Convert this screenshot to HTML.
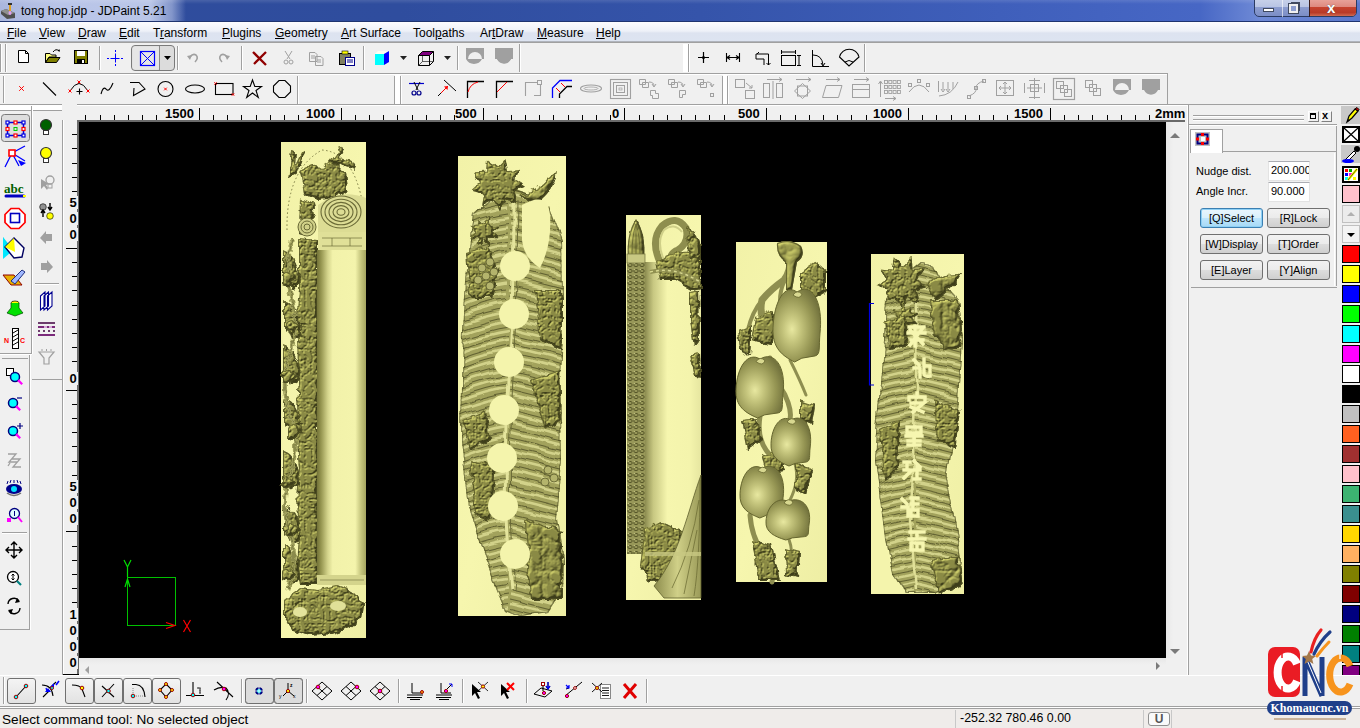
<!DOCTYPE html><html><head><meta charset="utf-8"><style>
*{margin:0;padding:0;box-sizing:border-box}
html,body{width:1360px;height:728px;overflow:hidden;background:#f0f0f0;font-family:"Liberation Sans",sans-serif;color:#000}
.a{position:absolute}
.hl{position:absolute;height:1px}
.vl{position:absolute;width:1px}
svg{position:absolute;overflow:visible}
.menu span{position:absolute;top:27px;font-size:12px;line-height:12px;white-space:nowrap}
.menu u{text-decoration:underline;text-underline-offset:1px;text-decoration-thickness:1px}
.rl{position:absolute;font-weight:bold;font-size:13px;line-height:13px;background:#f0f0f0}
.btn{position:absolute;border:1px solid #707070;border-radius:3px;background:linear-gradient(#f2f2f2,#ebebeb 50%,#dddddd 51%,#cfcfcf);font-size:11px;text-align:center;line-height:18px}
.pal{position:absolute;left:1342px;width:18px;height:18px;border:1px solid #000}
.tb{position:absolute;border:1px solid #707070;border-radius:3px;background:linear-gradient(#f2f2f2,#ebebeb 50%,#dddddd 51%,#cfcfcf)}
</style></head><body>
<div class="a" style="left:0;top:0;width:1360px;height:22px;background:linear-gradient(90deg,#2f4c9c 0px,#2f4d9e 400px,#3554aa 700px,#3f5fbb 1000px,#4767c5 1200px,#6f8ad6 1260px,#5a78cc 1360px)"></div>
<div class="a" style="left:0;top:0;width:190px;height:22px;background:linear-gradient(90deg,#aab6de 0px,#b9c5e8 60px,#bac6e8 150px,rgba(186,198,232,0.6) 172px,rgba(186,198,232,0) 186px)"></div>
<div class="a" style="left:0;top:0;width:1360px;height:4px;background:linear-gradient(rgba(255,255,255,0.12),rgba(255,255,255,0))"></div>
<div class="hl" style="left:0;top:21px;width:1360px;background:#1f3470"></div>
<div class="a" style="left:21px;top:4px;font-size:12px;line-height:14px;color:#000;white-space:nowrap">tong hop.jdp - JDPaint 5.21</div>
<div class="a" style="left:1254px;top:-2px;width:103px;height:19px;border:1px solid #2b3b63;border-radius:0 0 5px 5px;overflow:hidden;background:linear-gradient(#c8d2ea,#b9c5e4 45%,#8d9ed0 46%,#7c8ec6)"></div>
<div class="a" style="left:1309px;top:-1px;width:47px;height:17px;border-radius:0 0 4px 0;background:linear-gradient(#e9a59c,#de8a80 45%,#c8432f 46%,#b83a28 80%,#d06a50)"></div>
<div class="vl" style="left:1282px;top:0;height:17px;background:#fff;opacity:.6"></div>
<div class="vl" style="left:1309px;top:0;height:17px;background:#3b1d1a"></div>
<div class="a" style="left:1263px;top:8px;width:11px;height:4px;background:#fff;border:1px solid #404a60"></div>
<div class="a" style="left:1291px;top:2px;width:9px;height:9px;border:1px solid #404a60;background:#fff"></div>
<div class="a" style="left:1289px;top:4px;width:9px;height:9px;border:2px solid #f0f0f0;outline:1px solid #404a60;background:#8d9ed0"></div>
<div class="a" style="left:1327px;top:0px;font-size:15px;font-weight:bold;color:#fff;line-height:15px;text-shadow:0 0 1px #333">x</div>
<div class="a" style="left:0;top:22px;width:1360px;height:20px;background:linear-gradient(#fcfcfe,#eef1f8 45%,#dde3f0 55%,#dde4f1)"></div>
<div class="hl" style="left:0;top:41px;width:1360px;background:#b0b4bc"></div>
<div class="hl" style="left:0;top:42px;width:1360px;background:#a0a0a0"></div>
<div class="menu"><span style="left:7px"><u>F</u>ile</span><span style="left:39px"><u>V</u>iew</span><span style="left:78px"><u>D</u>raw</span><span style="left:119px"><u>E</u>dit</span><span style="left:153px">T<u>r</u>ansform</span><span style="left:222px"><u>P</u>lugins</span><span style="left:275px"><u>G</u>eometry</span><span style="left:341px"><u>A</u>rt Surface</span><span style="left:413px">Tool<u>p</u>aths</span><span style="left:480px">Ar<u>t</u>Draw</span><span style="left:537px"><u>M</u>easure</span><span style="left:596px"><u>H</u>elp</span></div>
<div class="hl" style="left:0;top:73px;width:1168px;background:#a0a0a0"></div>
<div class="hl" style="left:0;top:74px;width:1167px;background:#fff"></div>
<div class="hl" style="left:0;top:104px;width:1360px;background:#a0a0a0"></div>
<div class="hl" style="left:0;top:105px;width:1188px;background:#fff"></div>
<div class="vl" style="left:0px;top:44px;height:28px;background:#a0a0a0"></div>
<div class="vl" style="left:1px;top:44px;height:28px;background:#fff"></div>
<div class="vl" style="left:5px;top:44px;height:28px;background:#a0a0a0"></div>
<div class="vl" style="left:6px;top:44px;height:28px;background:#fff"></div>
<div class="vl" style="left:99px;top:46px;height:24px;background:#a0a0a0"></div>
<div class="vl" style="left:100px;top:46px;height:24px;background:#fff"></div>
<div class="vl" style="left:177px;top:46px;height:24px;background:#a0a0a0"></div>
<div class="vl" style="left:178px;top:46px;height:24px;background:#fff"></div>
<div class="vl" style="left:241px;top:46px;height:24px;background:#a0a0a0"></div>
<div class="vl" style="left:242px;top:46px;height:24px;background:#fff"></div>
<div class="vl" style="left:363px;top:46px;height:24px;background:#a0a0a0"></div>
<div class="vl" style="left:364px;top:46px;height:24px;background:#fff"></div>
<div class="vl" style="left:457px;top:46px;height:24px;background:#a0a0a0"></div>
<div class="vl" style="left:458px;top:46px;height:24px;background:#fff"></div>
<div class="vl" style="left:519px;top:44px;height:28px;background:#a0a0a0"></div>
<div class="vl" style="left:520px;top:44px;height:28px;background:#fff"></div>
<div class="vl" style="left:683px;top:44px;height:28px;background:#a0a0a0"></div>
<div class="vl" style="left:684px;top:44px;height:28px;background:#fff"></div>
<div class="vl" style="left:688px;top:44px;height:28px;background:#a0a0a0"></div>
<div class="vl" style="left:689px;top:44px;height:28px;background:#fff"></div>
<div class="vl" style="left:864px;top:44px;height:28px;background:#a0a0a0"></div>
<div class="vl" style="left:865px;top:44px;height:28px;background:#fff"></div>
<div class="vl" style="left:3px;top:76px;height:27px;background:#a0a0a0"></div>
<div class="vl" style="left:4px;top:76px;height:27px;background:#fff"></div>
<div class="vl" style="left:297px;top:76px;height:28px;background:#a0a0a0"></div>
<div class="vl" style="left:298px;top:76px;height:28px;background:#fff"></div>
<div class="vl" style="left:394px;top:76px;height:28px;background:#a0a0a0"></div>
<div class="vl" style="left:395px;top:76px;height:28px;background:#fff"></div>
<div class="vl" style="left:400px;top:76px;height:28px;background:#a0a0a0"></div>
<div class="vl" style="left:401px;top:76px;height:28px;background:#fff"></div>
<div class="hl" style="left:398px;top:73px;width:770px;background:#a0a0a0"></div>
<div class="vl" style="left:722px;top:76px;height:28px;background:#a0a0a0"></div>
<div class="vl" style="left:723px;top:76px;height:28px;background:#fff"></div>
<div class="vl" style="left:727px;top:76px;height:28px;background:#a0a0a0"></div>
<div class="vl" style="left:728px;top:76px;height:28px;background:#fff"></div>
<div class="vl" style="left:1167px;top:74px;height:30px;background:#a0a0a0"></div>
<div class="hl" style="left:62px;top:104px;width:15px;height:2px;background:#f0f0f0"></div>
<div class="a" style="left:0;top:105px;width:62px;height:5px;background:#fff"></div>
<div class="hl" style="left:0;top:110px;width:62px;background:#a0a0a0"></div>
<div class="vl" style="left:31px;top:106px;height:248px;background:#a0a0a0"></div>
<div class="vl" style="left:32px;top:106px;height:248px;background:#fff"></div>
<div class="hl" style="left:0;top:353px;width:32px;background:#a0a0a0"></div>
<div class="hl" style="left:0;top:354px;width:32px;background:#fff"></div>
<div class="hl" style="left:2px;top:358px;width:26px;background:#a0a0a0"></div>
<div class="vl" style="left:29px;top:355px;height:275px;background:#a0a0a0"></div>
<div class="vl" style="left:30px;top:355px;height:275px;background:#fff"></div>
<div class="hl" style="left:0;top:629px;width:30px;background:#a0a0a0"></div>
<div class="vl" style="left:62px;top:120px;height:555px;background:#a0a0a0"></div>
<div class="vl" style="left:63px;top:120px;height:555px;background:#fff"></div>
<div class="hl" style="left:32px;top:379px;width:31px;background:#a0a0a0"></div>
<div class="hl" style="left:2px;top:532px;width:25px;background:#a0a0a0"></div>
<div class="hl" style="left:2px;top:533px;width:25px;background:#fff"></div>
<div class="hl" style="left:35px;top:283px;width:24px;background:#a0a0a0"></div>
<div class="hl" style="left:35px;top:284px;width:24px;background:#fff"></div>
<div class="hl" style="left:78px;top:120px;width:1107px;height:2px;background:#6a6a6a"></div>
<div class="vl" style="left:85px;top:115px;height:5px;background:#000"></div><div class="vl" style="left:100px;top:115px;height:5px;background:#000"></div><div class="vl" style="left:114px;top:115px;height:5px;background:#000"></div><div class="vl" style="left:128px;top:115px;height:5px;background:#000"></div><div class="vl" style="left:142px;top:115px;height:5px;background:#000"></div><div class="vl" style="left:156px;top:115px;height:5px;background:#000"></div><div class="vl" style="left:171px;top:115px;height:5px;background:#000"></div><div class="vl" style="left:185px;top:115px;height:5px;background:#000"></div><div class="vl" style="left:199px;top:108px;height:12px;background:#000"></div><div class="vl" style="left:213px;top:115px;height:5px;background:#000"></div><div class="vl" style="left:227px;top:115px;height:5px;background:#000"></div><div class="vl" style="left:241px;top:115px;height:5px;background:#000"></div><div class="vl" style="left:256px;top:115px;height:5px;background:#000"></div><div class="vl" style="left:270px;top:115px;height:5px;background:#000"></div><div class="vl" style="left:284px;top:115px;height:5px;background:#000"></div><div class="vl" style="left:298px;top:115px;height:5px;background:#000"></div><div class="vl" style="left:312px;top:115px;height:5px;background:#000"></div><div class="vl" style="left:327px;top:115px;height:5px;background:#000"></div><div class="vl" style="left:341px;top:108px;height:12px;background:#000"></div><div class="vl" style="left:355px;top:115px;height:5px;background:#000"></div><div class="vl" style="left:369px;top:115px;height:5px;background:#000"></div><div class="vl" style="left:383px;top:115px;height:5px;background:#000"></div><div class="vl" style="left:397px;top:115px;height:5px;background:#000"></div><div class="vl" style="left:412px;top:115px;height:5px;background:#000"></div><div class="vl" style="left:426px;top:115px;height:5px;background:#000"></div><div class="vl" style="left:440px;top:115px;height:5px;background:#000"></div><div class="vl" style="left:454px;top:115px;height:5px;background:#000"></div><div class="vl" style="left:468px;top:115px;height:5px;background:#000"></div><div class="vl" style="left:483px;top:108px;height:12px;background:#000"></div><div class="vl" style="left:497px;top:115px;height:5px;background:#000"></div><div class="vl" style="left:511px;top:115px;height:5px;background:#000"></div><div class="vl" style="left:525px;top:115px;height:5px;background:#000"></div><div class="vl" style="left:539px;top:115px;height:5px;background:#000"></div><div class="vl" style="left:553px;top:115px;height:5px;background:#000"></div><div class="vl" style="left:568px;top:115px;height:5px;background:#000"></div><div class="vl" style="left:582px;top:115px;height:5px;background:#000"></div><div class="vl" style="left:596px;top:115px;height:5px;background:#000"></div><div class="vl" style="left:610px;top:115px;height:5px;background:#000"></div><div class="vl" style="left:624px;top:108px;height:12px;background:#000"></div><div class="vl" style="left:639px;top:115px;height:5px;background:#000"></div><div class="vl" style="left:653px;top:115px;height:5px;background:#000"></div><div class="vl" style="left:667px;top:115px;height:5px;background:#000"></div><div class="vl" style="left:681px;top:115px;height:5px;background:#000"></div><div class="vl" style="left:695px;top:115px;height:5px;background:#000"></div><div class="vl" style="left:709px;top:115px;height:5px;background:#000"></div><div class="vl" style="left:724px;top:115px;height:5px;background:#000"></div><div class="vl" style="left:738px;top:115px;height:5px;background:#000"></div><div class="vl" style="left:752px;top:115px;height:5px;background:#000"></div><div class="vl" style="left:766px;top:108px;height:12px;background:#000"></div><div class="vl" style="left:780px;top:115px;height:5px;background:#000"></div><div class="vl" style="left:795px;top:115px;height:5px;background:#000"></div><div class="vl" style="left:809px;top:115px;height:5px;background:#000"></div><div class="vl" style="left:823px;top:115px;height:5px;background:#000"></div><div class="vl" style="left:837px;top:115px;height:5px;background:#000"></div><div class="vl" style="left:851px;top:115px;height:5px;background:#000"></div><div class="vl" style="left:866px;top:115px;height:5px;background:#000"></div><div class="vl" style="left:880px;top:115px;height:5px;background:#000"></div><div class="vl" style="left:894px;top:115px;height:5px;background:#000"></div><div class="vl" style="left:908px;top:108px;height:12px;background:#000"></div><div class="vl" style="left:922px;top:115px;height:5px;background:#000"></div><div class="vl" style="left:936px;top:115px;height:5px;background:#000"></div><div class="vl" style="left:951px;top:115px;height:5px;background:#000"></div><div class="vl" style="left:965px;top:115px;height:5px;background:#000"></div><div class="vl" style="left:979px;top:115px;height:5px;background:#000"></div><div class="vl" style="left:993px;top:115px;height:5px;background:#000"></div><div class="vl" style="left:1007px;top:115px;height:5px;background:#000"></div><div class="vl" style="left:1022px;top:115px;height:5px;background:#000"></div><div class="vl" style="left:1036px;top:115px;height:5px;background:#000"></div><div class="vl" style="left:1050px;top:108px;height:12px;background:#000"></div><div class="vl" style="left:1064px;top:115px;height:5px;background:#000"></div><div class="vl" style="left:1078px;top:115px;height:5px;background:#000"></div><div class="vl" style="left:1092px;top:115px;height:5px;background:#000"></div><div class="vl" style="left:1107px;top:115px;height:5px;background:#000"></div><div class="vl" style="left:1121px;top:115px;height:5px;background:#000"></div><div class="vl" style="left:1135px;top:115px;height:5px;background:#000"></div><div class="vl" style="left:1149px;top:115px;height:5px;background:#000"></div><div class="vl" style="left:1163px;top:115px;height:5px;background:#000"></div>
<div class="rl" style="left:165px;top:107px">1500</div>
<div class="rl" style="left:306px;top:107px">1000</div>
<div class="rl" style="left:455px;top:107px">500</div>
<div class="rl" style="left:612px;top:107px">0</div>
<div class="rl" style="left:738px;top:107px">500</div>
<div class="rl" style="left:873px;top:107px">1000</div>
<div class="rl" style="left:1014px;top:107px">1500</div>
<div class="rl" style="left:1155px;top:107px">2mm</div>
<div class="vl" style="left:77px;top:120px;height:555px;width:2px;background:#6a6a6a"></div>
<div class="hl" style="left:72px;top:134px;width:5px;background:#000"></div><div class="hl" style="left:72px;top:148px;width:5px;background:#000"></div><div class="hl" style="left:72px;top:163px;width:5px;background:#000"></div><div class="hl" style="left:72px;top:177px;width:5px;background:#000"></div><div class="hl" style="left:72px;top:191px;width:5px;background:#000"></div><div class="hl" style="left:72px;top:205px;width:5px;background:#000"></div><div class="hl" style="left:72px;top:219px;width:5px;background:#000"></div><div class="hl" style="left:72px;top:234px;width:5px;background:#000"></div><div class="hl" style="left:66px;top:248px;width:11px;background:#000"></div><div class="hl" style="left:72px;top:262px;width:5px;background:#000"></div><div class="hl" style="left:72px;top:276px;width:5px;background:#000"></div><div class="hl" style="left:72px;top:290px;width:5px;background:#000"></div><div class="hl" style="left:72px;top:305px;width:5px;background:#000"></div><div class="hl" style="left:72px;top:319px;width:5px;background:#000"></div><div class="hl" style="left:72px;top:333px;width:5px;background:#000"></div><div class="hl" style="left:72px;top:347px;width:5px;background:#000"></div><div class="hl" style="left:72px;top:361px;width:5px;background:#000"></div><div class="hl" style="left:72px;top:375px;width:5px;background:#000"></div><div class="hl" style="left:66px;top:390px;width:11px;background:#000"></div><div class="hl" style="left:72px;top:404px;width:5px;background:#000"></div><div class="hl" style="left:72px;top:418px;width:5px;background:#000"></div><div class="hl" style="left:72px;top:432px;width:5px;background:#000"></div><div class="hl" style="left:72px;top:446px;width:5px;background:#000"></div><div class="hl" style="left:72px;top:461px;width:5px;background:#000"></div><div class="hl" style="left:72px;top:475px;width:5px;background:#000"></div><div class="hl" style="left:72px;top:489px;width:5px;background:#000"></div><div class="hl" style="left:72px;top:503px;width:5px;background:#000"></div><div class="hl" style="left:72px;top:517px;width:5px;background:#000"></div><div class="hl" style="left:66px;top:531px;width:11px;background:#000"></div><div class="hl" style="left:72px;top:546px;width:5px;background:#000"></div><div class="hl" style="left:72px;top:560px;width:5px;background:#000"></div><div class="hl" style="left:72px;top:574px;width:5px;background:#000"></div><div class="hl" style="left:72px;top:588px;width:5px;background:#000"></div><div class="hl" style="left:72px;top:602px;width:5px;background:#000"></div><div class="hl" style="left:72px;top:617px;width:5px;background:#000"></div><div class="hl" style="left:72px;top:631px;width:5px;background:#000"></div><div class="hl" style="left:72px;top:645px;width:5px;background:#000"></div><div class="hl" style="left:72px;top:659px;width:5px;background:#000"></div>
<div class="rl" style="left:68px;top:196px;width:10px;text-align:center">5</div><div class="rl" style="left:68px;top:212px;width:10px;text-align:center">0</div><div class="rl" style="left:68px;top:228px;width:10px;text-align:center">0</div>
<div class="rl" style="left:68px;top:372px;width:10px;text-align:center">0</div>
<div class="rl" style="left:68px;top:480px;width:10px;text-align:center">5</div><div class="rl" style="left:68px;top:496px;width:10px;text-align:center">0</div><div class="rl" style="left:68px;top:512px;width:10px;text-align:center">0</div>
<div class="rl" style="left:68px;top:608px;width:10px;text-align:center">1</div><div class="rl" style="left:68px;top:624px;width:10px;text-align:center">0</div><div class="rl" style="left:68px;top:640px;width:10px;text-align:center">0</div><div class="rl" style="left:68px;top:656px;width:10px;text-align:center">0</div>
<div class="hl" style="left:63px;top:674px;width:16px;background:#000"></div>
<div class="a" style="left:79px;top:122px;width:1087px;height:536px;background:#000"></div>
<div class="a" style="left:1166px;top:122px;width:18px;height:536px;background:linear-gradient(90deg,#e8e8e8,#f0f0f0 40%,#f0f0f0)"></div>
<div class="a" style="left:79px;top:658px;width:1087px;height:17px;background:linear-gradient(#e8e8e8,#f0f0f0 40%)"></div>
<svg class="a" style="left:0;top:0" width="1360" height="728"><path d="M1170 138 L1175 133 L1180 138 Z" fill="#7a7a7a"/><path d="M1170 649 L1175 654 L1180 649 Z" fill="#7a7a7a"/><path d="M89 666 L85 670 L89 674 Z" fill="#a0a0a0"/><path d="M1156 662 L1160 666 L1156 670 Z" fill="#7a7a7a"/></svg>
<div class="vl" style="left:1188px;top:105px;height:570px;background:#a0a0a0"></div>
<div class="vl" style="left:1187px;top:105px;height:570px;background:#fff"></div>
<div class="hl" style="left:1189px;top:104px;width:171px;background:#a0a0a0"></div>
<div class="hl" style="left:1193px;top:115px;width:111px;background:#a0a0a0"></div>
<div class="hl" style="left:1193px;top:116px;width:111px;background:#fff"></div>
<div class="hl" style="left:1193px;top:119px;width:111px;background:#a0a0a0"></div>
<div class="hl" style="left:1193px;top:120px;width:111px;background:#fff"></div>
<div class="a" style="left:1308px;top:111px;width:11px;height:11px;border-right:1px solid #808080;border-bottom:1px solid #808080;border-top:1px solid #fff;border-left:1px solid #fff"></div>
<div class="a" style="left:1310px;top:113px;width:6px;height:6px;border:1px solid #000;border-top-width:2px"></div>
<div class="a" style="left:1321px;top:111px;width:11px;height:11px;border-right:1px solid #808080;border-bottom:1px solid #808080;border-top:1px solid #fff;border-left:1px solid #fff"></div>
<div class="a" style="left:1322px;top:109px;font-size:11px;font-weight:bold;line-height:13px">x</div>
<div class="hl" style="left:1189px;top:124px;width:148px;background:#a0a0a0"></div>
<div class="hl" style="left:1189px;top:125px;width:148px;background:#fff"></div>
<div class="a" style="left:1190px;top:129px;width:33px;height:24px;background:#fff;border-top:1px solid #a0a0a0;border-right:1px solid #a0a0a0;border-left:1px solid #a0a0a0"></div>
<div class="hl" style="left:1222px;top:151px;width:114px;background:#a0a0a0"></div>
<div class="vl" style="left:1336px;top:126px;height:160px;background:#a0a0a0"></div>
<div class="hl" style="left:1191px;top:287px;width:146px;background:#a0a0a0"></div>
<div class="vl" style="left:1334px;top:153px;height:133px;background:#fff"></div>
<svg style="left:1195px;top:132px" width="16" height="15"><rect x="0" y="0" width="15" height="14" fill="#c0c0c0"/><rect x="2.5" y="2.5" width="10" height="9" fill="none" stroke="#000080" stroke-width="2"/><rect x="6" y="1" width="3" height="3" fill="#f00"/><rect x="6" y="10" width="3" height="3" fill="#f00"/><rect x="1" y="5.5" width="3" height="3" fill="#f00"/><rect x="11" y="5.5" width="3" height="3" fill="#f00"/><rect x="6" y="5" width="4" height="4" fill="#fff"/></svg>
<div class="a" style="left:1196px;top:165px;font-size:11px;line-height:13px">Nudge dist.</div>
<div class="a" style="left:1196px;top:185px;font-size:11px;line-height:13px">Angle Incr.</div>
<div class="a" style="left:1268px;top:161px;width:42px;height:20px;background:#fff;border:1px solid #e3e3e3;border-top-color:#abadb3;font-size:11px;line-height:17px;padding-left:2px;overflow:hidden;white-space:nowrap">200.000</div>
<div class="a" style="left:1268px;top:182px;width:42px;height:20px;background:#fff;border:1px solid #e3e3e3;border-top-color:#abadb3;font-size:11px;line-height:17px;padding-left:2px;overflow:hidden;white-space:nowrap">90.000</div>
<div class="btn" style="left:1200px;top:208px;width:63px;height:20px;border-color:#3c7fb1;background:linear-gradient(#eaf6fd,#d9f0fc 50%,#bee6fd 51%,#a7d9f5);box-shadow:inset 0 0 0 1px #8ed0f5">[Q]Select</div>
<div class="btn" style="left:1267px;top:208px;width:63px;height:20px;">[R]Lock</div>
<div class="btn" style="left:1200px;top:234px;width:63px;height:20px;">[W]Display</div>
<div class="btn" style="left:1267px;top:234px;width:63px;height:20px;">[T]Order</div>
<div class="btn" style="left:1200px;top:260px;width:63px;height:20px;">[E]Layer</div>
<div class="btn" style="left:1267px;top:260px;width:63px;height:20px;">[Y]Align</div>
<div class="a" style="left:1341px;top:106px;width:19px;height:18px;background:#c8c8c8"></div>
<svg style="left:1342px;top:106px" width="18" height="18"><path d="M5 16 L7 10 L13 3 L16 5 L10 12 Z" fill="#ff0" stroke="#000" stroke-width="1.2"/><path d="M13 3 L15 1.5 L17 3.5 L16 5 Z" fill="#c00" stroke="#000" stroke-width="1"/><path d="M5 16 L6 13 L8 14.5 Z" fill="#000"/></svg>
<div class="a" style="left:1342px;top:126px;width:18px;height:17px;border:2px solid #000;background:#fff"></div>
<svg style="left:1342px;top:126px" width="18" height="17"><path d="M2 2 L16 15 M16 2 L2 15" stroke="#000" stroke-width="1.2"/></svg>
<div class="a" style="left:1341px;top:145px;width:19px;height:18px;background:#c8c8c8"></div>
<svg style="left:1342px;top:145px" width="18" height="18"><path d="M3 15 L12 6 L14 8 L5 17 Z" fill="#fff" stroke="#000"/><circle cx="15" cy="4" r="3" fill="#000"/><ellipse cx="6" cy="16" rx="6" ry="2" fill="#00f"/></svg>
<div class="a" style="left:1342px;top:166px;width:18px;height:17px;background:#000"></div>
<svg style="left:1343px;top:167px" width="16" height="15"><rect x="1" y="1" width="14" height="13" fill="#fff"/><rect x="2" y="2" width="3" height="3" fill="#f00"/><rect x="6" y="2" width="3" height="3" fill="#0a0"/><rect x="2" y="6" width="3" height="3" fill="#00f"/><rect x="6" y="6" width="3" height="3" fill="#f0f"/><rect x="2" y="10" width="3" height="3" fill="#0ff"/><rect x="10" y="10" width="3" height="3" fill="#ff0"/><path d="M5 13 L14 2" stroke="#ff0" stroke-width="2.5"/><path d="M5 13 L14 2" stroke="#000" stroke-width=".6"/></svg>
<div class="pal" style="top:185px;height:18px;background:#ffc0cb;border-color:#000"></div>
<div class="a" style="left:1342px;top:205px;width:18px;height:18px;border:1px solid #c0c0c0;background:#ececec"></div>
<svg style="left:1342px;top:205px" width="18" height="18"><path d="M5 11 L9 7 L13 11 Z" fill="#b0b0b0"/></svg>
<div class="a" style="left:1342px;top:225px;width:18px;height:18px;border:1px solid #c0c0c0;background:#f4f4f4"></div>
<svg style="left:1342px;top:225px" width="18" height="18"><path d="M5 8 L9 12 L13 8 Z" fill="#000"/></svg>
<div class="pal" style="top:245px;height:18px;background:#ff0000;"></div>
<div class="pal" style="top:265px;height:18px;background:#ffff00;"></div>
<div class="pal" style="top:285px;height:18px;background:#0000ff;"></div>
<div class="pal" style="top:305px;height:18px;background:#00ff00;"></div>
<div class="pal" style="top:325px;height:18px;background:#00ffff;"></div>
<div class="pal" style="top:345px;height:18px;background:#ff00ff;"></div>
<div class="pal" style="top:365px;height:18px;background:#ffffff;"></div>
<div class="pal" style="top:385px;height:18px;background:#000000;"></div>
<div class="pal" style="top:405px;height:18px;background:#c0c0c0;"></div>
<div class="pal" style="top:425px;height:18px;background:#ff6020;"></div>
<div class="pal" style="top:445px;height:18px;background:#a03030;"></div>
<div class="pal" style="top:465px;height:18px;background:#ffc0cb;"></div>
<div class="pal" style="top:485px;height:18px;background:#3cb371;"></div>
<div class="pal" style="top:505px;height:18px;background:#3a8f8f;"></div>
<div class="pal" style="top:525px;height:18px;background:#ffd700;"></div>
<div class="pal" style="top:545px;height:18px;background:#ffb060;"></div>
<div class="pal" style="top:565px;height:18px;background:#808000;"></div>
<div class="pal" style="top:585px;height:18px;background:#800000;"></div>
<div class="pal" style="top:605px;height:18px;background:#000080;"></div>
<div class="pal" style="top:625px;height:18px;background:#008000;"></div>
<div class="pal" style="top:645px;height:18px;background:#008080;"></div>
<div class="pal" style="top:665px;height:10px;background:#800080;border-bottom:none"></div>
<div class="hl" style="left:0;top:675px;width:1360px;background:#fff"></div>
<div class="hl" style="left:0;top:706px;width:1360px;background:#a0a0a0"></div>
<div class="hl" style="left:0;top:707px;width:1360px;background:#fff"></div>
<div class="hl" style="left:0;top:708px;width:1360px;background:#a0a0a0"></div>
<div class="vl" style="left:3px;top:677px;height:27px;background:#a0a0a0"></div>
<div class="vl" style="left:4px;top:677px;height:27px;background:#fff"></div>
<div class="vl" style="left:241px;top:679px;height:24px;background:#a0a0a0"></div>
<div class="vl" style="left:242px;top:679px;height:24px;background:#fff"></div>
<div class="vl" style="left:306px;top:679px;height:24px;background:#a0a0a0"></div>
<div class="vl" style="left:307px;top:679px;height:24px;background:#fff"></div>
<div class="vl" style="left:398px;top:679px;height:24px;background:#a0a0a0"></div>
<div class="vl" style="left:399px;top:679px;height:24px;background:#fff"></div>
<div class="vl" style="left:462px;top:679px;height:24px;background:#a0a0a0"></div>
<div class="vl" style="left:463px;top:679px;height:24px;background:#fff"></div>
<div class="vl" style="left:526px;top:679px;height:24px;background:#a0a0a0"></div>
<div class="vl" style="left:527px;top:679px;height:24px;background:#fff"></div>
<div class="vl" style="left:646px;top:679px;height:24px;background:#a0a0a0"></div>
<div class="vl" style="left:647px;top:679px;height:24px;background:#fff"></div>
<div class="tb" style="left:7px;top:678px;width:29px;height:26px;background:linear-gradient(#f4f4f4,#e2e2e2)"></div>
<div class="tb" style="left:65px;top:678px;width:29px;height:26px;background:linear-gradient(#f4f4f4,#e2e2e2)"></div>
<div class="tb" style="left:94px;top:678px;width:29px;height:26px;background:linear-gradient(#f4f4f4,#e2e2e2)"></div>
<div class="tb" style="left:123px;top:678px;width:29px;height:26px;background:linear-gradient(#f4f4f4,#e2e2e2)"></div>
<div class="tb" style="left:152px;top:678px;width:29px;height:26px;background:linear-gradient(#f4f4f4,#e2e2e2)"></div>
<div class="tb" style="left:245px;top:678px;width:29px;height:26px;background:linear-gradient(#f4f4f4,#e2e2e2)"></div>
<div class="tb" style="left:274px;top:678px;width:29px;height:26px;background:linear-gradient(#f4f4f4,#e2e2e2)"></div>
<div class="a" style="left:0;top:709px;width:1360px;height:19px;background:#efecea"></div>
<div class="a" style="left:2px;top:712px;font-size:13.6px;line-height:15px;white-space:nowrap">Select command tool: No selected object</div>
<div class="vl" style="left:955px;top:710px;height:18px;background:#c8c8c8"></div>
<div class="vl" style="left:1143px;top:710px;height:18px;background:#c8c8c8"></div>
<div class="vl" style="left:1171px;top:710px;height:18px;background:#c8c8c8"></div>
<div class="a" style="left:960px;top:711px;font-size:12.4px;line-height:15px;white-space:nowrap">-252.32 780.46 0.00</div>
<div class="a" style="left:1148px;top:712px;width:22px;height:14px;border:1px solid #909090;border-radius:3px;background:#fafafa;font-size:12px;line-height:12px;text-align:center;color:#555;font-weight:bold">U</div>
<svg class="a" style="left:0;top:0" width="1360" height="728" viewBox="0 0 1360 728">
<defs>
<filter id="r1" x="79" y="122" width="1087" height="536" filterUnits="userSpaceOnUse" color-interpolation-filters="sRGB">
  <feTurbulence type="fractalNoise" baseFrequency="0.12" numOctaves="2" seed="104" result="dn"/>
  <feDisplacementMap in="SourceAlpha" in2="dn" scale="9" xChannelSelector="R" yChannelSelector="G" result="da"/>
  <feTurbulence type="turbulence" baseFrequency="0.07" numOctaves="3" seed="4" result="t"/>
  <feColorMatrix in="t" type="matrix" values="0 0 0 0 0  0 0 0 0 0  0 0 0 0 0  1 0 0 0 0" result="ta"/>
  <feGaussianBlur in="da" stdDeviation="1.6" result="b"/>
  <feComposite in="ta" in2="b" operator="arithmetic" k1="0" k2="0.55" k3="0.8" k4="0" result="h"/>
  <feDiffuseLighting in="h" surfaceScale="5" diffuseConstant="1.0" lighting-color="#ffff90" result="L"><feDistantLight azimuth="235" elevation="30"/></feDiffuseLighting>
  <feColorMatrix in="L" type="matrix" values="0.6 0 0 0 0.24  0 0.6 0 0 0.24  0 0 0.6 0 0.10  0 0 0 0 1" result="L2"/>
  <feComposite in="L2" in2="da" operator="in" result="body"/>
  <feMorphology in="da" operator="erode" radius="1" result="er"/>
  <feComposite in="da" in2="er" operator="out" result="edge"/>
  <feFlood flood-color="#4e4e22" flood-opacity="0.75"/>
  <feComposite in2="edge" operator="in" result="edgec"/>
  <feMerge><feMergeNode in="body"/><feMergeNode in="edgec"/></feMerge>
</filter>
<filter id="r2" x="79" y="122" width="1087" height="536" filterUnits="userSpaceOnUse" color-interpolation-filters="sRGB">
  <feTurbulence type="fractalNoise" baseFrequency="0.12" numOctaves="2" seed="109" result="dn"/>
  <feDisplacementMap in="SourceAlpha" in2="dn" scale="9" xChannelSelector="R" yChannelSelector="G" result="da"/>
  <feTurbulence type="turbulence" baseFrequency="0.13" numOctaves="3" seed="9" result="t"/>
  <feColorMatrix in="t" type="matrix" values="0 0 0 0 0  0 0 0 0 0  0 0 0 0 0  1 0 0 0 0" result="ta"/>
  <feGaussianBlur in="da" stdDeviation="1.6" result="b"/>
  <feComposite in="ta" in2="b" operator="arithmetic" k1="0" k2="0.7" k3="0.8" k4="0" result="h"/>
  <feDiffuseLighting in="h" surfaceScale="5" diffuseConstant="1.0" lighting-color="#ffff90" result="L"><feDistantLight azimuth="235" elevation="30"/></feDiffuseLighting>
  <feColorMatrix in="L" type="matrix" values="0.6 0 0 0 0.24  0 0.6 0 0 0.24  0 0 0.6 0 0.10  0 0 0 0 1" result="L2"/>
  <feComposite in="L2" in2="da" operator="in" result="body"/>
  <feMorphology in="da" operator="erode" radius="1" result="er"/>
  <feComposite in="da" in2="er" operator="out" result="edge"/>
  <feFlood flood-color="#4e4e22" flood-opacity="0.75"/>
  <feComposite in2="edge" operator="in" result="edgec"/>
  <feMerge><feMergeNode in="body"/><feMergeNode in="edgec"/></feMerge>
</filter>
<filter id="r3" x="79" y="122" width="1087" height="536" filterUnits="userSpaceOnUse" color-interpolation-filters="sRGB">
  <feTurbulence type="fractalNoise" baseFrequency="0.12" numOctaves="2" seed="117" result="dn"/>
  <feDisplacementMap in="SourceAlpha" in2="dn" scale="7" xChannelSelector="R" yChannelSelector="G" result="da"/>
  <feTurbulence type="turbulence" baseFrequency="0.16" numOctaves="3" seed="17" result="t"/>
  <feColorMatrix in="t" type="matrix" values="0 0 0 0 0  0 0 0 0 0  0 0 0 0 0  1 0 0 0 0" result="ta"/>
  <feGaussianBlur in="da" stdDeviation="1.6" result="b"/>
  <feComposite in="ta" in2="b" operator="arithmetic" k1="0" k2="0.8" k3="0.8" k4="0" result="h"/>
  <feDiffuseLighting in="h" surfaceScale="5" diffuseConstant="1.0" lighting-color="#ffff90" result="L"><feDistantLight azimuth="235" elevation="30"/></feDiffuseLighting>
  <feColorMatrix in="L" type="matrix" values="0.6 0 0 0 0.24  0 0.6 0 0 0.24  0 0 0.6 0 0.10  0 0 0 0 1" result="L2"/>
  <feComposite in="L2" in2="da" operator="in" result="body"/>
  <feMorphology in="da" operator="erode" radius="1" result="er"/>
  <feComposite in="da" in2="er" operator="out" result="edge"/>
  <feFlood flood-color="#4e4e22" flood-opacity="0.75"/>
  <feComposite in2="edge" operator="in" result="edgec"/>
  <feMerge><feMergeNode in="body"/><feMergeNode in="edgec"/></feMerge>
</filter>
<filter id="r4" x="79" y="122" width="1087" height="536" filterUnits="userSpaceOnUse" color-interpolation-filters="sRGB">
  <feTurbulence type="fractalNoise" baseFrequency="0.12" numOctaves="2" seed="123" result="dn"/>
  <feDisplacementMap in="SourceAlpha" in2="dn" scale="2" xChannelSelector="R" yChannelSelector="G" result="da"/>
  <feTurbulence type="turbulence" baseFrequency="0.04" numOctaves="3" seed="23" result="t"/>
  <feColorMatrix in="t" type="matrix" values="0 0 0 0 0  0 0 0 0 0  0 0 0 0 0  1 0 0 0 0" result="ta"/>
  <feGaussianBlur in="da" stdDeviation="1.6" result="b"/>
  <feComposite in="ta" in2="b" operator="arithmetic" k1="0" k2="0.4" k3="0.8" k4="0" result="h"/>
  <feDiffuseLighting in="h" surfaceScale="5" diffuseConstant="1.0" lighting-color="#ffff90" result="L"><feDistantLight azimuth="235" elevation="40"/></feDiffuseLighting>
  <feColorMatrix in="L" type="matrix" values="0.6 0 0 0 0.24  0 0.6 0 0 0.24  0 0 0.6 0 0.10  0 0 0 0 1" result="L2"/>
  <feComposite in="L2" in2="da" operator="in" result="body"/>
  <feMorphology in="da" operator="erode" radius="1" result="er"/>
  <feComposite in="da" in2="er" operator="out" result="edge"/>
  <feFlood flood-color="#4e4e22" flood-opacity="0.75"/>
  <feComposite in2="edge" operator="in" result="edgec"/>
  <feMerge><feMergeNode in="body"/><feMergeNode in="edgec"/></feMerge>
</filter>
<filter id="tx" x="79" y="122" width="1087" height="536" filterUnits="userSpaceOnUse" color-interpolation-filters="sRGB">
 <feTurbulence type="fractalNoise" baseFrequency="0.5" numOctaves="2" seed="7" result="n"/>
 <feColorMatrix in="n" type="matrix" values="0 0 0 0 0.33  0 0 0 0 0.33  0 0 0 0 0.13  -12 0 0 0 4.9" result="d"/>
 <feComposite in="d" in2="SourceGraphic" operator="in" result="d2"/>
 <feMerge><feMergeNode in="SourceGraphic"/><feMergeNode in="d2"/></feMerge>
</filter>
<filter id="soft" x="79" y="122" width="1087" height="536" filterUnits="userSpaceOnUse"><feTurbulence type="fractalNoise" baseFrequency="0.2" numOctaves="2" seed="3" result="dn"/><feDisplacementMap in="SourceGraphic" in2="dn" scale="7" xChannelSelector="R" yChannelSelector="G"/></filter>
<filter id="wav" x="79" y="122" width="1087" height="536" filterUnits="userSpaceOnUse"><feTurbulence type="fractalNoise" baseFrequency="0.035" numOctaves="2" seed="12" result="dn"/><feDisplacementMap in="SourceGraphic" in2="dn" scale="9" xChannelSelector="R" yChannelSelector="G" result="dd"/>
  <feMorphology in="dd" operator="erode" radius="1" result="er"/>
  <feComposite in="dd" in2="er" operator="out" result="edge"/>
  <feFlood flood-color="#4e4e22" flood-opacity="0.7"/>
  <feComposite in2="edge" operator="in" result="edgec"/>
  <feMerge><feMergeNode in="dd"/><feMergeNode in="edgec"/></feMerge></filter>
<linearGradient id="bg" x1="0" y1="0" x2="1" y2="1"><stop offset="0" stop-color="#f2f2a8"/><stop offset="0.5" stop-color="#f6f6ae"/><stop offset="1" stop-color="#eeeea4"/></linearGradient>
<linearGradient id="cyl1" x1="317" y1="0" x2="366" y2="0" gradientUnits="userSpaceOnUse">
 <stop offset="0" stop-color="#727238"/><stop offset="0.08" stop-color="#94944f"/><stop offset="0.22" stop-color="#d4d48c"/><stop offset="0.32" stop-color="#f2f2aa"/><stop offset="0.78" stop-color="#f4f4ac"/><stop offset="0.9" stop-color="#c4c47c"/><stop offset="1" stop-color="#a4a460"/></linearGradient>
<linearGradient id="cyl3" x1="645" y1="0" x2="701" y2="0" gradientUnits="userSpaceOnUse">
 <stop offset="0" stop-color="#8c8c50"/><stop offset="0.15" stop-color="#c8c882"/><stop offset="0.4" stop-color="#f6f6ae"/><stop offset="0.8" stop-color="#f4f4ac"/><stop offset="1" stop-color="#e6e6a0"/></linearGradient>
<radialGradient id="pch" cx="0.4" cy="0.55" r="0.62"><stop offset="0" stop-color="#e8e8a0"/><stop offset="0.3" stop-color="#c4c47c"/><stop offset="0.7" stop-color="#969654"/><stop offset="1" stop-color="#74743e"/></radialGradient>
</defs>
<rect x="281" y="142" width="85" height="496" fill="url(#bg)"/>
<path d="M299 238 L318 240 L318 585 L300 585 Q296 560 299 540 Q294 500 299 470 Q295 420 299 380 Q295 320 299 290 Z" fill="#fff" filter="url(#r3)" />
<path d="M283 250 Q299 256 300 284 L291 290 Q287 274 283 280 Z" fill="#fff" filter="url(#r3)" />
<path d="M284 300 Q300 306 301 334 L292 340 Q288 324 284 330 Z" fill="#fff" filter="url(#r3)" />
<path d="M283 345 Q299 351 300 379 L291 385 Q287 369 283 375 Z" fill="#fff" filter="url(#r3)" />
<path d="M284 398 Q300 404 301 432 L292 438 Q288 422 284 428 Z" fill="#fff" filter="url(#r3)" />
<path d="M283 450 Q299 456 300 484 L291 490 Q287 474 283 480 Z" fill="#fff" filter="url(#r3)" />
<path d="M284 505 Q300 511 301 539 L292 545 Q288 529 284 535 Z" fill="#fff" filter="url(#r3)" />
<path d="M283 545 Q299 551 300 579 L291 585 Q287 569 283 575 Z" fill="#fff" filter="url(#r3)" />
<path d="M292 240 Q284 270 292 300 Q300 330 288 360 Q280 390 292 420 Q300 450 288 480 Q280 510 292 540 Q298 565 288 590" fill="none" stroke="#a0a05c" stroke-width="4" filter="url(#soft)"/>
<path d="M292 240 Q284 270 292 300 Q300 330 288 360 Q280 390 292 420 Q300 450 288 480 Q280 510 292 540 Q298 565 288 590" fill="none" stroke="#5a5a2a" stroke-width="1" opacity=".6" filter="url(#soft)"/>
<path d="M282 275 Q288 267 296 279 Q290 289 282 285 Z" fill="#fff" filter="url(#r2)" />
<path d="M286 322 Q292 314 300 326 Q294 336 286 332 Z" fill="#fff" filter="url(#r2)" />
<path d="M282 372 Q288 364 296 376 Q290 386 282 382 Z" fill="#fff" filter="url(#r2)" />
<path d="M286 428 Q292 420 300 432 Q294 442 286 438 Z" fill="#fff" filter="url(#r2)" />
<path d="M282 478 Q288 470 296 482 Q290 492 282 488 Z" fill="#fff" filter="url(#r2)" />
<path d="M286 525 Q292 517 300 529 Q294 539 286 535 Z" fill="#fff" filter="url(#r2)" />
<path d="M282 570 Q288 562 296 574 Q290 584 282 580 Z" fill="#fff" filter="url(#r2)" />
<path d="M300 172 Q310 160 322 168 L334 160 L346 174 L348 190 L336 198 L318 200 L304 194 Z" fill="#fff" filter="url(#r3)" />
<path d="M288 178 L292 150 L296 151 L295 166 L302 151 L305 153 L297 174 Z" fill="#fff" filter="url(#r3)" />
<path d="M330 162 L341 147 L344 149 L339 158 L352 161 L357 170 L351 168 Z" fill="#fff" filter="url(#r3)" />
<path d="M300 198 L314 204 L316 214 L306 236 L299 234 Z" fill="#fff" filter="url(#r3)" />
<path d="M287 230 Q286 170 322 150 Q352 152 362 200" fill="none" stroke="#7a7a42" stroke-width="1" stroke-dasharray="1.5 2.5"/>
<path d="M318 232 L318 205 Q340 188 366 198 L366 232 Z" fill="#dcdc94"/>
<ellipse cx="341" cy="212" rx="4" ry="3.2" fill="none" stroke="#6a6a36" stroke-width="1.1"/>
<ellipse cx="341" cy="212" rx="8" ry="6.4" fill="none" stroke="#6a6a36" stroke-width="1.1"/>
<ellipse cx="341" cy="212" rx="12" ry="9.6" fill="none" stroke="#6a6a36" stroke-width="1.1"/>
<ellipse cx="341" cy="212" rx="16" ry="12.8" fill="none" stroke="#6a6a36" stroke-width="1.1"/>
<ellipse cx="341" cy="212" rx="20" ry="16.0" fill="none" stroke="#6a6a36" stroke-width="1.1"/>
<rect x="318" y="232" width="48" height="18" fill="#e0e098"/>
<path d="M322 238 H362 M322 246 H362 M332 238 V246 M350 238 V246" fill="none" stroke="#5a5a2a" stroke-width="1" opacity="0.6"/>
<circle cx="307" cy="227" r="9" fill="#d0d088"/>
<circle cx="307" cy="227" r="3" fill="none" stroke="#6a6a36" stroke-width="1"/>
<circle cx="307" cy="227" r="6" fill="none" stroke="#6a6a36" stroke-width="1"/>
<circle cx="307" cy="227" r="9" fill="none" stroke="#6a6a36" stroke-width="1"/>
<rect x="317" y="250" width="49" height="328" fill="url(#cyl1)"/>
<path d="M284 600 L300 588 L318 590 L336 586 L352 592 L364 604 L362 618 L350 628 L332 634 L310 636 L292 630 L284 618 Z" fill="#fff" filter="url(#r3)" />
<ellipse cx="300" cy="612" rx="7" ry="5" fill="#e4e49c"/><ellipse cx="338" cy="606" rx="8" ry="5" fill="#e0e098"/>
<rect x="317" y="575" width="49" height="10" fill="#d4d48c"/>
<path d="M320 580 H364" fill="none" stroke="#5a5a2a" stroke-width="1" opacity="0.5"/>
<rect x="458" y="156" width="108" height="460" fill="url(#bg)"/>
<clipPath id="c2"><path d="M468 250 L472 215 L490 200 L515 190 L530 195 L548 205 L562 240 L563 300 L560 380 L562 460 L557 520 L563 560 L562 590 L548 612 L520 616 L505 610 L494 582 L480 545 L468 505 L461 440 L463 330 Z"/></clipPath>
<g filter="url(#wav)">
<path d="M468 250 L472 215 L490 200 L515 190 L530 195 L548 205 L562 240 L563 300 L560 380 L562 460 L557 520 L563 560 L562 590 L548 612 L520 616 L505 610 L494 582 L480 545 L468 505 L461 440 L463 330 Z" fill="#a2a25c"/>
<g clip-path="url(#c2)">
<path d="M510 147.0 Q532 152.0 566 161.0" fill="none" stroke="#d2d28a" stroke-width="2.6"/>
<path d="M510 143.0 Q532 148.0 566 157.0" fill="none" stroke="#56562a" stroke-width="1.2" opacity=".85"/>
<path d="M508 141.0 Q486 144.0 458 155.0" fill="none" stroke="#d2d28a" stroke-width="2.6"/>
<path d="M508 137.0 Q486 140.0 458 151.0" fill="none" stroke="#56562a" stroke-width="1.2" opacity=".85"/>
<path d="M510 156.5 Q532 161.5 566 170.5" fill="none" stroke="#d2d28a" stroke-width="2.6"/>
<path d="M510 152.5 Q532 157.5 566 166.5" fill="none" stroke="#56562a" stroke-width="1.2" opacity=".85"/>
<path d="M508 150.5 Q486 153.5 458 164.5" fill="none" stroke="#d2d28a" stroke-width="2.6"/>
<path d="M508 146.5 Q486 149.5 458 160.5" fill="none" stroke="#56562a" stroke-width="1.2" opacity=".85"/>
<path d="M510 166.0 Q532 171.0 566 180.0" fill="none" stroke="#d2d28a" stroke-width="2.6"/>
<path d="M510 162.0 Q532 167.0 566 176.0" fill="none" stroke="#56562a" stroke-width="1.2" opacity=".85"/>
<path d="M508 160.0 Q486 163.0 458 174.0" fill="none" stroke="#d2d28a" stroke-width="2.6"/>
<path d="M508 156.0 Q486 159.0 458 170.0" fill="none" stroke="#56562a" stroke-width="1.2" opacity=".85"/>
<path d="M510 175.5 Q532 180.5 566 189.5" fill="none" stroke="#d2d28a" stroke-width="2.6"/>
<path d="M510 171.5 Q532 176.5 566 185.5" fill="none" stroke="#56562a" stroke-width="1.2" opacity=".85"/>
<path d="M508 169.5 Q486 172.5 458 183.5" fill="none" stroke="#d2d28a" stroke-width="2.6"/>
<path d="M508 165.5 Q486 168.5 458 179.5" fill="none" stroke="#56562a" stroke-width="1.2" opacity=".85"/>
<path d="M510 185.0 Q532 190.0 566 199.0" fill="none" stroke="#d2d28a" stroke-width="2.6"/>
<path d="M510 181.0 Q532 186.0 566 195.0" fill="none" stroke="#56562a" stroke-width="1.2" opacity=".85"/>
<path d="M508 179.0 Q486 182.0 458 193.0" fill="none" stroke="#d2d28a" stroke-width="2.6"/>
<path d="M508 175.0 Q486 178.0 458 189.0" fill="none" stroke="#56562a" stroke-width="1.2" opacity=".85"/>
<path d="M510 194.5 Q532 199.5 566 208.5" fill="none" stroke="#d2d28a" stroke-width="2.6"/>
<path d="M510 190.5 Q532 195.5 566 204.5" fill="none" stroke="#56562a" stroke-width="1.2" opacity=".85"/>
<path d="M508 188.5 Q486 191.5 458 202.5" fill="none" stroke="#d2d28a" stroke-width="2.6"/>
<path d="M508 184.5 Q486 187.5 458 198.5" fill="none" stroke="#56562a" stroke-width="1.2" opacity=".85"/>
<path d="M510 204.0 Q532 209.0 566 218.0" fill="none" stroke="#d2d28a" stroke-width="2.6"/>
<path d="M510 200.0 Q532 205.0 566 214.0" fill="none" stroke="#56562a" stroke-width="1.2" opacity=".85"/>
<path d="M508 198.0 Q486 201.0 458 212.0" fill="none" stroke="#d2d28a" stroke-width="2.6"/>
<path d="M508 194.0 Q486 197.0 458 208.0" fill="none" stroke="#56562a" stroke-width="1.2" opacity=".85"/>
<path d="M510 213.5 Q532 218.5 566 227.5" fill="none" stroke="#d2d28a" stroke-width="2.6"/>
<path d="M510 209.5 Q532 214.5 566 223.5" fill="none" stroke="#56562a" stroke-width="1.2" opacity=".85"/>
<path d="M508 207.5 Q486 210.5 458 221.5" fill="none" stroke="#d2d28a" stroke-width="2.6"/>
<path d="M508 203.5 Q486 206.5 458 217.5" fill="none" stroke="#56562a" stroke-width="1.2" opacity=".85"/>
<path d="M510 223.0 Q532 228.0 566 237.0" fill="none" stroke="#d2d28a" stroke-width="2.6"/>
<path d="M510 219.0 Q532 224.0 566 233.0" fill="none" stroke="#56562a" stroke-width="1.2" opacity=".85"/>
<path d="M508 217.0 Q486 220.0 458 231.0" fill="none" stroke="#d2d28a" stroke-width="2.6"/>
<path d="M508 213.0 Q486 216.0 458 227.0" fill="none" stroke="#56562a" stroke-width="1.2" opacity=".85"/>
<path d="M510 232.5 Q532 237.5 566 246.5" fill="none" stroke="#d2d28a" stroke-width="2.6"/>
<path d="M510 228.5 Q532 233.5 566 242.5" fill="none" stroke="#56562a" stroke-width="1.2" opacity=".85"/>
<path d="M508 226.5 Q486 229.5 458 240.5" fill="none" stroke="#d2d28a" stroke-width="2.6"/>
<path d="M508 222.5 Q486 225.5 458 236.5" fill="none" stroke="#56562a" stroke-width="1.2" opacity=".85"/>
<path d="M510 242.0 Q532 247.0 566 256.0" fill="none" stroke="#d2d28a" stroke-width="2.6"/>
<path d="M510 238.0 Q532 243.0 566 252.0" fill="none" stroke="#56562a" stroke-width="1.2" opacity=".85"/>
<path d="M508 236.0 Q486 239.0 458 250.0" fill="none" stroke="#d2d28a" stroke-width="2.6"/>
<path d="M508 232.0 Q486 235.0 458 246.0" fill="none" stroke="#56562a" stroke-width="1.2" opacity=".85"/>
<path d="M510 251.5 Q532 256.5 566 265.5" fill="none" stroke="#d2d28a" stroke-width="2.6"/>
<path d="M510 247.5 Q532 252.5 566 261.5" fill="none" stroke="#56562a" stroke-width="1.2" opacity=".85"/>
<path d="M508 245.5 Q486 248.5 458 259.5" fill="none" stroke="#d2d28a" stroke-width="2.6"/>
<path d="M508 241.5 Q486 244.5 458 255.5" fill="none" stroke="#56562a" stroke-width="1.2" opacity=".85"/>
<path d="M510 261.0 Q532 266.0 566 275.0" fill="none" stroke="#d2d28a" stroke-width="2.6"/>
<path d="M510 257.0 Q532 262.0 566 271.0" fill="none" stroke="#56562a" stroke-width="1.2" opacity=".85"/>
<path d="M508 255.0 Q486 258.0 458 269.0" fill="none" stroke="#d2d28a" stroke-width="2.6"/>
<path d="M508 251.0 Q486 254.0 458 265.0" fill="none" stroke="#56562a" stroke-width="1.2" opacity=".85"/>
<path d="M510 270.5 Q532 275.5 566 284.5" fill="none" stroke="#d2d28a" stroke-width="2.6"/>
<path d="M510 266.5 Q532 271.5 566 280.5" fill="none" stroke="#56562a" stroke-width="1.2" opacity=".85"/>
<path d="M508 264.5 Q486 267.5 458 278.5" fill="none" stroke="#d2d28a" stroke-width="2.6"/>
<path d="M508 260.5 Q486 263.5 458 274.5" fill="none" stroke="#56562a" stroke-width="1.2" opacity=".85"/>
<path d="M510 280.0 Q532 285.0 566 294.0" fill="none" stroke="#d2d28a" stroke-width="2.6"/>
<path d="M510 276.0 Q532 281.0 566 290.0" fill="none" stroke="#56562a" stroke-width="1.2" opacity=".85"/>
<path d="M508 274.0 Q486 277.0 458 288.0" fill="none" stroke="#d2d28a" stroke-width="2.6"/>
<path d="M508 270.0 Q486 273.0 458 284.0" fill="none" stroke="#56562a" stroke-width="1.2" opacity=".85"/>
<path d="M510 289.5 Q532 294.5 566 303.5" fill="none" stroke="#d2d28a" stroke-width="2.6"/>
<path d="M510 285.5 Q532 290.5 566 299.5" fill="none" stroke="#56562a" stroke-width="1.2" opacity=".85"/>
<path d="M508 283.5 Q486 286.5 458 297.5" fill="none" stroke="#d2d28a" stroke-width="2.6"/>
<path d="M508 279.5 Q486 282.5 458 293.5" fill="none" stroke="#56562a" stroke-width="1.2" opacity=".85"/>
<path d="M510 299.0 Q532 304.0 566 313.0" fill="none" stroke="#d2d28a" stroke-width="2.6"/>
<path d="M510 295.0 Q532 300.0 566 309.0" fill="none" stroke="#56562a" stroke-width="1.2" opacity=".85"/>
<path d="M508 293.0 Q486 296.0 458 307.0" fill="none" stroke="#d2d28a" stroke-width="2.6"/>
<path d="M508 289.0 Q486 292.0 458 303.0" fill="none" stroke="#56562a" stroke-width="1.2" opacity=".85"/>
<path d="M510 308.5 Q532 313.5 566 322.5" fill="none" stroke="#d2d28a" stroke-width="2.6"/>
<path d="M510 304.5 Q532 309.5 566 318.5" fill="none" stroke="#56562a" stroke-width="1.2" opacity=".85"/>
<path d="M508 302.5 Q486 305.5 458 316.5" fill="none" stroke="#d2d28a" stroke-width="2.6"/>
<path d="M508 298.5 Q486 301.5 458 312.5" fill="none" stroke="#56562a" stroke-width="1.2" opacity=".85"/>
<path d="M510 318.0 Q532 323.0 566 332.0" fill="none" stroke="#d2d28a" stroke-width="2.6"/>
<path d="M510 314.0 Q532 319.0 566 328.0" fill="none" stroke="#56562a" stroke-width="1.2" opacity=".85"/>
<path d="M508 312.0 Q486 315.0 458 326.0" fill="none" stroke="#d2d28a" stroke-width="2.6"/>
<path d="M508 308.0 Q486 311.0 458 322.0" fill="none" stroke="#56562a" stroke-width="1.2" opacity=".85"/>
<path d="M510 327.5 Q532 332.5 566 341.5" fill="none" stroke="#d2d28a" stroke-width="2.6"/>
<path d="M510 323.5 Q532 328.5 566 337.5" fill="none" stroke="#56562a" stroke-width="1.2" opacity=".85"/>
<path d="M508 321.5 Q486 324.5 458 335.5" fill="none" stroke="#d2d28a" stroke-width="2.6"/>
<path d="M508 317.5 Q486 320.5 458 331.5" fill="none" stroke="#56562a" stroke-width="1.2" opacity=".85"/>
<path d="M510 337.0 Q532 342.0 566 351.0" fill="none" stroke="#d2d28a" stroke-width="2.6"/>
<path d="M510 333.0 Q532 338.0 566 347.0" fill="none" stroke="#56562a" stroke-width="1.2" opacity=".85"/>
<path d="M508 331.0 Q486 334.0 458 345.0" fill="none" stroke="#d2d28a" stroke-width="2.6"/>
<path d="M508 327.0 Q486 330.0 458 341.0" fill="none" stroke="#56562a" stroke-width="1.2" opacity=".85"/>
<path d="M510 346.5 Q532 351.5 566 360.5" fill="none" stroke="#d2d28a" stroke-width="2.6"/>
<path d="M510 342.5 Q532 347.5 566 356.5" fill="none" stroke="#56562a" stroke-width="1.2" opacity=".85"/>
<path d="M508 340.5 Q486 343.5 458 354.5" fill="none" stroke="#d2d28a" stroke-width="2.6"/>
<path d="M508 336.5 Q486 339.5 458 350.5" fill="none" stroke="#56562a" stroke-width="1.2" opacity=".85"/>
<path d="M510 356.0 Q532 361.0 566 370.0" fill="none" stroke="#d2d28a" stroke-width="2.6"/>
<path d="M510 352.0 Q532 357.0 566 366.0" fill="none" stroke="#56562a" stroke-width="1.2" opacity=".85"/>
<path d="M508 350.0 Q486 353.0 458 364.0" fill="none" stroke="#d2d28a" stroke-width="2.6"/>
<path d="M508 346.0 Q486 349.0 458 360.0" fill="none" stroke="#56562a" stroke-width="1.2" opacity=".85"/>
<path d="M510 365.5 Q532 370.5 566 379.5" fill="none" stroke="#d2d28a" stroke-width="2.6"/>
<path d="M510 361.5 Q532 366.5 566 375.5" fill="none" stroke="#56562a" stroke-width="1.2" opacity=".85"/>
<path d="M508 359.5 Q486 362.5 458 373.5" fill="none" stroke="#d2d28a" stroke-width="2.6"/>
<path d="M508 355.5 Q486 358.5 458 369.5" fill="none" stroke="#56562a" stroke-width="1.2" opacity=".85"/>
<path d="M510 375.0 Q532 380.0 566 389.0" fill="none" stroke="#d2d28a" stroke-width="2.6"/>
<path d="M510 371.0 Q532 376.0 566 385.0" fill="none" stroke="#56562a" stroke-width="1.2" opacity=".85"/>
<path d="M508 369.0 Q486 372.0 458 383.0" fill="none" stroke="#d2d28a" stroke-width="2.6"/>
<path d="M508 365.0 Q486 368.0 458 379.0" fill="none" stroke="#56562a" stroke-width="1.2" opacity=".85"/>
<path d="M510 384.5 Q532 389.5 566 398.5" fill="none" stroke="#d2d28a" stroke-width="2.6"/>
<path d="M510 380.5 Q532 385.5 566 394.5" fill="none" stroke="#56562a" stroke-width="1.2" opacity=".85"/>
<path d="M508 378.5 Q486 381.5 458 392.5" fill="none" stroke="#d2d28a" stroke-width="2.6"/>
<path d="M508 374.5 Q486 377.5 458 388.5" fill="none" stroke="#56562a" stroke-width="1.2" opacity=".85"/>
<path d="M510 394.0 Q532 399.0 566 408.0" fill="none" stroke="#d2d28a" stroke-width="2.6"/>
<path d="M510 390.0 Q532 395.0 566 404.0" fill="none" stroke="#56562a" stroke-width="1.2" opacity=".85"/>
<path d="M508 388.0 Q486 391.0 458 402.0" fill="none" stroke="#d2d28a" stroke-width="2.6"/>
<path d="M508 384.0 Q486 387.0 458 398.0" fill="none" stroke="#56562a" stroke-width="1.2" opacity=".85"/>
<path d="M510 403.5 Q532 408.5 566 417.5" fill="none" stroke="#d2d28a" stroke-width="2.6"/>
<path d="M510 399.5 Q532 404.5 566 413.5" fill="none" stroke="#56562a" stroke-width="1.2" opacity=".85"/>
<path d="M508 397.5 Q486 400.5 458 411.5" fill="none" stroke="#d2d28a" stroke-width="2.6"/>
<path d="M508 393.5 Q486 396.5 458 407.5" fill="none" stroke="#56562a" stroke-width="1.2" opacity=".85"/>
<path d="M510 413.0 Q532 418.0 566 427.0" fill="none" stroke="#d2d28a" stroke-width="2.6"/>
<path d="M510 409.0 Q532 414.0 566 423.0" fill="none" stroke="#56562a" stroke-width="1.2" opacity=".85"/>
<path d="M508 407.0 Q486 410.0 458 421.0" fill="none" stroke="#d2d28a" stroke-width="2.6"/>
<path d="M508 403.0 Q486 406.0 458 417.0" fill="none" stroke="#56562a" stroke-width="1.2" opacity=".85"/>
<path d="M510 422.5 Q532 427.5 566 436.5" fill="none" stroke="#d2d28a" stroke-width="2.6"/>
<path d="M510 418.5 Q532 423.5 566 432.5" fill="none" stroke="#56562a" stroke-width="1.2" opacity=".85"/>
<path d="M508 416.5 Q486 419.5 458 430.5" fill="none" stroke="#d2d28a" stroke-width="2.6"/>
<path d="M508 412.5 Q486 415.5 458 426.5" fill="none" stroke="#56562a" stroke-width="1.2" opacity=".85"/>
<path d="M510 432.0 Q532 437.0 566 446.0" fill="none" stroke="#d2d28a" stroke-width="2.6"/>
<path d="M510 428.0 Q532 433.0 566 442.0" fill="none" stroke="#56562a" stroke-width="1.2" opacity=".85"/>
<path d="M508 426.0 Q486 429.0 458 440.0" fill="none" stroke="#d2d28a" stroke-width="2.6"/>
<path d="M508 422.0 Q486 425.0 458 436.0" fill="none" stroke="#56562a" stroke-width="1.2" opacity=".85"/>
<path d="M510 441.5 Q532 446.5 566 455.5" fill="none" stroke="#d2d28a" stroke-width="2.6"/>
<path d="M510 437.5 Q532 442.5 566 451.5" fill="none" stroke="#56562a" stroke-width="1.2" opacity=".85"/>
<path d="M508 435.5 Q486 438.5 458 449.5" fill="none" stroke="#d2d28a" stroke-width="2.6"/>
<path d="M508 431.5 Q486 434.5 458 445.5" fill="none" stroke="#56562a" stroke-width="1.2" opacity=".85"/>
<path d="M510 451.0 Q532 456.0 566 465.0" fill="none" stroke="#d2d28a" stroke-width="2.6"/>
<path d="M510 447.0 Q532 452.0 566 461.0" fill="none" stroke="#56562a" stroke-width="1.2" opacity=".85"/>
<path d="M508 445.0 Q486 448.0 458 459.0" fill="none" stroke="#d2d28a" stroke-width="2.6"/>
<path d="M508 441.0 Q486 444.0 458 455.0" fill="none" stroke="#56562a" stroke-width="1.2" opacity=".85"/>
<path d="M510 460.5 Q532 465.5 566 474.5" fill="none" stroke="#d2d28a" stroke-width="2.6"/>
<path d="M510 456.5 Q532 461.5 566 470.5" fill="none" stroke="#56562a" stroke-width="1.2" opacity=".85"/>
<path d="M508 454.5 Q486 457.5 458 468.5" fill="none" stroke="#d2d28a" stroke-width="2.6"/>
<path d="M508 450.5 Q486 453.5 458 464.5" fill="none" stroke="#56562a" stroke-width="1.2" opacity=".85"/>
<path d="M510 470.0 Q532 475.0 566 484.0" fill="none" stroke="#d2d28a" stroke-width="2.6"/>
<path d="M510 466.0 Q532 471.0 566 480.0" fill="none" stroke="#56562a" stroke-width="1.2" opacity=".85"/>
<path d="M508 464.0 Q486 467.0 458 478.0" fill="none" stroke="#d2d28a" stroke-width="2.6"/>
<path d="M508 460.0 Q486 463.0 458 474.0" fill="none" stroke="#56562a" stroke-width="1.2" opacity=".85"/>
<path d="M510 479.5 Q532 484.5 566 493.5" fill="none" stroke="#d2d28a" stroke-width="2.6"/>
<path d="M510 475.5 Q532 480.5 566 489.5" fill="none" stroke="#56562a" stroke-width="1.2" opacity=".85"/>
<path d="M508 473.5 Q486 476.5 458 487.5" fill="none" stroke="#d2d28a" stroke-width="2.6"/>
<path d="M508 469.5 Q486 472.5 458 483.5" fill="none" stroke="#56562a" stroke-width="1.2" opacity=".85"/>
<path d="M510 489.0 Q532 494.0 566 503.0" fill="none" stroke="#d2d28a" stroke-width="2.6"/>
<path d="M510 485.0 Q532 490.0 566 499.0" fill="none" stroke="#56562a" stroke-width="1.2" opacity=".85"/>
<path d="M508 483.0 Q486 486.0 458 497.0" fill="none" stroke="#d2d28a" stroke-width="2.6"/>
<path d="M508 479.0 Q486 482.0 458 493.0" fill="none" stroke="#56562a" stroke-width="1.2" opacity=".85"/>
<path d="M510 498.5 Q532 503.5 566 512.5" fill="none" stroke="#d2d28a" stroke-width="2.6"/>
<path d="M510 494.5 Q532 499.5 566 508.5" fill="none" stroke="#56562a" stroke-width="1.2" opacity=".85"/>
<path d="M508 492.5 Q486 495.5 458 506.5" fill="none" stroke="#d2d28a" stroke-width="2.6"/>
<path d="M508 488.5 Q486 491.5 458 502.5" fill="none" stroke="#56562a" stroke-width="1.2" opacity=".85"/>
<path d="M510 508.0 Q532 513.0 566 522.0" fill="none" stroke="#d2d28a" stroke-width="2.6"/>
<path d="M510 504.0 Q532 509.0 566 518.0" fill="none" stroke="#56562a" stroke-width="1.2" opacity=".85"/>
<path d="M508 502.0 Q486 505.0 458 516.0" fill="none" stroke="#d2d28a" stroke-width="2.6"/>
<path d="M508 498.0 Q486 501.0 458 512.0" fill="none" stroke="#56562a" stroke-width="1.2" opacity=".85"/>
<path d="M510 517.5 Q532 522.5 566 531.5" fill="none" stroke="#d2d28a" stroke-width="2.6"/>
<path d="M510 513.5 Q532 518.5 566 527.5" fill="none" stroke="#56562a" stroke-width="1.2" opacity=".85"/>
<path d="M508 511.5 Q486 514.5 458 525.5" fill="none" stroke="#d2d28a" stroke-width="2.6"/>
<path d="M508 507.5 Q486 510.5 458 521.5" fill="none" stroke="#56562a" stroke-width="1.2" opacity=".85"/>
<path d="M510 527.0 Q532 532.0 566 541.0" fill="none" stroke="#d2d28a" stroke-width="2.6"/>
<path d="M510 523.0 Q532 528.0 566 537.0" fill="none" stroke="#56562a" stroke-width="1.2" opacity=".85"/>
<path d="M508 521.0 Q486 524.0 458 535.0" fill="none" stroke="#d2d28a" stroke-width="2.6"/>
<path d="M508 517.0 Q486 520.0 458 531.0" fill="none" stroke="#56562a" stroke-width="1.2" opacity=".85"/>
<path d="M510 536.5 Q532 541.5 566 550.5" fill="none" stroke="#d2d28a" stroke-width="2.6"/>
<path d="M510 532.5 Q532 537.5 566 546.5" fill="none" stroke="#56562a" stroke-width="1.2" opacity=".85"/>
<path d="M508 530.5 Q486 533.5 458 544.5" fill="none" stroke="#d2d28a" stroke-width="2.6"/>
<path d="M508 526.5 Q486 529.5 458 540.5" fill="none" stroke="#56562a" stroke-width="1.2" opacity=".85"/>
<path d="M510 546.0 Q532 551.0 566 560.0" fill="none" stroke="#d2d28a" stroke-width="2.6"/>
<path d="M510 542.0 Q532 547.0 566 556.0" fill="none" stroke="#56562a" stroke-width="1.2" opacity=".85"/>
<path d="M508 540.0 Q486 543.0 458 554.0" fill="none" stroke="#d2d28a" stroke-width="2.6"/>
<path d="M508 536.0 Q486 539.0 458 550.0" fill="none" stroke="#56562a" stroke-width="1.2" opacity=".85"/>
<path d="M510 555.5 Q532 560.5 566 569.5" fill="none" stroke="#d2d28a" stroke-width="2.6"/>
<path d="M510 551.5 Q532 556.5 566 565.5" fill="none" stroke="#56562a" stroke-width="1.2" opacity=".85"/>
<path d="M508 549.5 Q486 552.5 458 563.5" fill="none" stroke="#d2d28a" stroke-width="2.6"/>
<path d="M508 545.5 Q486 548.5 458 559.5" fill="none" stroke="#56562a" stroke-width="1.2" opacity=".85"/>
<path d="M510 565.0 Q532 570.0 566 579.0" fill="none" stroke="#d2d28a" stroke-width="2.6"/>
<path d="M510 561.0 Q532 566.0 566 575.0" fill="none" stroke="#56562a" stroke-width="1.2" opacity=".85"/>
<path d="M508 559.0 Q486 562.0 458 573.0" fill="none" stroke="#d2d28a" stroke-width="2.6"/>
<path d="M508 555.0 Q486 558.0 458 569.0" fill="none" stroke="#56562a" stroke-width="1.2" opacity=".85"/>
<path d="M510 574.5 Q532 579.5 566 588.5" fill="none" stroke="#d2d28a" stroke-width="2.6"/>
<path d="M510 570.5 Q532 575.5 566 584.5" fill="none" stroke="#56562a" stroke-width="1.2" opacity=".85"/>
<path d="M508 568.5 Q486 571.5 458 582.5" fill="none" stroke="#d2d28a" stroke-width="2.6"/>
<path d="M508 564.5 Q486 567.5 458 578.5" fill="none" stroke="#56562a" stroke-width="1.2" opacity=".85"/>
<path d="M510 584.0 Q532 589.0 566 598.0" fill="none" stroke="#d2d28a" stroke-width="2.6"/>
<path d="M510 580.0 Q532 585.0 566 594.0" fill="none" stroke="#56562a" stroke-width="1.2" opacity=".85"/>
<path d="M508 578.0 Q486 581.0 458 592.0" fill="none" stroke="#d2d28a" stroke-width="2.6"/>
<path d="M508 574.0 Q486 577.0 458 588.0" fill="none" stroke="#56562a" stroke-width="1.2" opacity=".85"/>
<path d="M510 593.5 Q532 598.5 566 607.5" fill="none" stroke="#d2d28a" stroke-width="2.6"/>
<path d="M510 589.5 Q532 594.5 566 603.5" fill="none" stroke="#56562a" stroke-width="1.2" opacity=".85"/>
<path d="M508 587.5 Q486 590.5 458 601.5" fill="none" stroke="#d2d28a" stroke-width="2.6"/>
<path d="M508 583.5 Q486 586.5 458 597.5" fill="none" stroke="#56562a" stroke-width="1.2" opacity=".85"/>
<path d="M510 603.0 Q532 608.0 566 617.0" fill="none" stroke="#d2d28a" stroke-width="2.6"/>
<path d="M510 599.0 Q532 604.0 566 613.0" fill="none" stroke="#56562a" stroke-width="1.2" opacity=".85"/>
<path d="M508 597.0 Q486 600.0 458 611.0" fill="none" stroke="#d2d28a" stroke-width="2.6"/>
<path d="M508 593.0 Q486 596.0 458 607.0" fill="none" stroke="#56562a" stroke-width="1.2" opacity=".85"/>
<path d="M510 612.5 Q532 617.5 566 626.5" fill="none" stroke="#d2d28a" stroke-width="2.6"/>
<path d="M510 608.5 Q532 613.5 566 622.5" fill="none" stroke="#56562a" stroke-width="1.2" opacity=".85"/>
<path d="M508 606.5 Q486 609.5 458 620.5" fill="none" stroke="#d2d28a" stroke-width="2.6"/>
<path d="M508 602.5 Q486 605.5 458 616.5" fill="none" stroke="#56562a" stroke-width="1.2" opacity=".85"/>
<path d="M510 622.0 Q532 627.0 566 636.0" fill="none" stroke="#d2d28a" stroke-width="2.6"/>
<path d="M510 618.0 Q532 623.0 566 632.0" fill="none" stroke="#56562a" stroke-width="1.2" opacity=".85"/>
<path d="M508 616.0 Q486 619.0 458 630.0" fill="none" stroke="#d2d28a" stroke-width="2.6"/>
<path d="M508 612.0 Q486 615.0 458 626.0" fill="none" stroke="#56562a" stroke-width="1.2" opacity=".85"/>
<path d="M510 631.5 Q532 636.5 566 645.5" fill="none" stroke="#d2d28a" stroke-width="2.6"/>
<path d="M510 627.5 Q532 632.5 566 641.5" fill="none" stroke="#56562a" stroke-width="1.2" opacity=".85"/>
<path d="M508 625.5 Q486 628.5 458 639.5" fill="none" stroke="#d2d28a" stroke-width="2.6"/>
<path d="M508 621.5 Q486 624.5 458 635.5" fill="none" stroke="#56562a" stroke-width="1.2" opacity=".85"/>
<path d="M510 641.0 Q532 646.0 566 655.0" fill="none" stroke="#d2d28a" stroke-width="2.6"/>
<path d="M510 637.0 Q532 642.0 566 651.0" fill="none" stroke="#56562a" stroke-width="1.2" opacity=".85"/>
<path d="M508 635.0 Q486 638.0 458 649.0" fill="none" stroke="#d2d28a" stroke-width="2.6"/>
<path d="M508 631.0 Q486 634.0 458 645.0" fill="none" stroke="#56562a" stroke-width="1.2" opacity=".85"/>
<path d="M510 650.5 Q532 655.5 566 664.5" fill="none" stroke="#d2d28a" stroke-width="2.6"/>
<path d="M510 646.5 Q532 651.5 566 660.5" fill="none" stroke="#56562a" stroke-width="1.2" opacity=".85"/>
<path d="M508 644.5 Q486 647.5 458 658.5" fill="none" stroke="#d2d28a" stroke-width="2.6"/>
<path d="M508 640.5 Q486 643.5 458 654.5" fill="none" stroke="#56562a" stroke-width="1.2" opacity=".85"/>
<path d="M510 660.0 Q532 665.0 566 674.0" fill="none" stroke="#d2d28a" stroke-width="2.6"/>
<path d="M510 656.0 Q532 661.0 566 670.0" fill="none" stroke="#56562a" stroke-width="1.2" opacity=".85"/>
<path d="M508 654.0 Q486 657.0 458 668.0" fill="none" stroke="#d2d28a" stroke-width="2.6"/>
<path d="M508 650.0 Q486 653.0 458 664.0" fill="none" stroke="#56562a" stroke-width="1.2" opacity=".85"/>
<path d="M510 669.5 Q532 674.5 566 683.5" fill="none" stroke="#d2d28a" stroke-width="2.6"/>
<path d="M510 665.5 Q532 670.5 566 679.5" fill="none" stroke="#56562a" stroke-width="1.2" opacity=".85"/>
<path d="M508 663.5 Q486 666.5 458 677.5" fill="none" stroke="#d2d28a" stroke-width="2.6"/>
<path d="M508 659.5 Q486 662.5 458 673.5" fill="none" stroke="#56562a" stroke-width="1.2" opacity=".85"/>
<path d="M510 679.0 Q532 684.0 566 693.0" fill="none" stroke="#d2d28a" stroke-width="2.6"/>
<path d="M510 675.0 Q532 680.0 566 689.0" fill="none" stroke="#56562a" stroke-width="1.2" opacity=".85"/>
<path d="M508 673.0 Q486 676.0 458 687.0" fill="none" stroke="#d2d28a" stroke-width="2.6"/>
<path d="M508 669.0 Q486 672.0 458 683.0" fill="none" stroke="#56562a" stroke-width="1.2" opacity=".85"/>
<path d="M510 688.5 Q532 693.5 566 702.5" fill="none" stroke="#d2d28a" stroke-width="2.6"/>
<path d="M510 684.5 Q532 689.5 566 698.5" fill="none" stroke="#56562a" stroke-width="1.2" opacity=".85"/>
<path d="M508 682.5 Q486 685.5 458 696.5" fill="none" stroke="#d2d28a" stroke-width="2.6"/>
<path d="M508 678.5 Q486 681.5 458 692.5" fill="none" stroke="#56562a" stroke-width="1.2" opacity=".85"/>
</g>
<path d="M514 200 Q514 300 508 400 Q503 500 512 590" fill="none" stroke="#e4e49c" stroke-width="3"/>
<path d="M518 200 Q518 300 512 400 Q507 500 516 590" fill="none" stroke="#6a6a36" stroke-width="1"/>
</g>
<path d="M524.9 186.7 L513.3 191.4 L516.8 203.3 L505.0 199.5 L500.0 210.9 L493.4 200.4 L482.2 205.9 L484.0 193.6 L471.8 190.7 L481.1 182.3 L473.7 172.3 L486.1 171.8 L486.9 159.4 L496.7 167.0 L505.3 158.0 L507.9 170.2 L520.3 168.8 L514.5 179.8 Z" fill="#fff" filter="url(#r3)" />
<path d="M498.7 238.2 L489.6 237.7 L490.0 246.8 L483.9 240.0 L477.8 246.7 L478.3 237.6 L469.2 238.0 L476.0 231.9 L469.3 225.8 L478.4 226.3 L478.0 217.2 L484.1 224.0 L490.2 217.3 L489.7 226.4 L498.8 226.0 L492.0 232.1 Z" fill="#fff" filter="url(#r3)" />
<path d="M520 195 Q540 190 548 178 L557 172 Q552 195 535 205 Z" fill="#fff" filter="url(#r1)" />
<path d="M466 252 L488 246 L498 270 L492 298 L470 298 Z" fill="#fff" filter="url(#r3)" />
<path d="M535 290 L562 290 L562 350 L540 340 Z" fill="#fff" filter="url(#r3)" />
<path d="M530 380 L560 370 L562 420 L545 430 Z" fill="#fff" filter="url(#r3)" />
<path d="M462 420 L485 410 L490 440 L470 450 Z" fill="#fff" filter="url(#r3)" />
<path d="M470 460 L495 465 L490 520 L475 515 Z" fill="#fff" filter="url(#r3)" />
<path d="M525 520 L562 530 L562 600 L530 600 Z" fill="#fff" filter="url(#r1)" />
<path d="M522 205 Q548 190 550 215 Q552 245 540 268 Q524 258 522 240 Z" fill="#f4f4ac"/>
<circle cx="482" cy="268" r="4" fill="#b4b46c" stroke="#5c5c2c" stroke-width=".8"/>
<circle cx="490" cy="262" r="4" fill="#b4b46c" stroke="#5c5c2c" stroke-width=".8"/>
<circle cx="486" cy="276" r="4" fill="#b4b46c" stroke="#5c5c2c" stroke-width=".8"/>
<circle cx="494" cy="272" r="4" fill="#b4b46c" stroke="#5c5c2c" stroke-width=".8"/>
<circle cx="478" cy="280" r="4" fill="#b4b46c" stroke="#5c5c2c" stroke-width=".8"/>
<circle cx="490" cy="286" r="4" fill="#b4b46c" stroke="#5c5c2c" stroke-width=".8"/>
<circle cx="548" cy="470" r="4" fill="#b4b46c" stroke="#5c5c2c" stroke-width=".8"/>
<circle cx="554" cy="478" r="4" fill="#b4b46c" stroke="#5c5c2c" stroke-width=".8"/>
<circle cx="545" cy="482" r="4" fill="#b4b46c" stroke="#5c5c2c" stroke-width=".8"/>
<circle cx="515" cy="266" r="15" fill="#f4f4ac"/>
<circle cx="514" cy="314" r="15" fill="#f4f4ac"/>
<circle cx="509" cy="362" r="15" fill="#f4f4ac"/>
<circle cx="504" cy="410" r="15" fill="#f4f4ac"/>
<circle cx="502" cy="458" r="15" fill="#f4f4ac"/>
<circle cx="503" cy="506" r="15" fill="#f4f4ac"/>
<circle cx="515" cy="554" r="15" fill="#f4f4ac"/>
<rect x="626" y="215" width="75" height="385" fill="url(#bg)"/>
<rect x="645" y="262" width="56" height="295" fill="url(#cyl3)"/>
<defs><pattern id="chain" x="627" y="262" width="6" height="6" patternUnits="userSpaceOnUse"><rect width="6" height="6" fill="#a4a460"/><ellipse cx="3" cy="3" rx="2.2" ry="1.6" fill="none" stroke="#5e5e2c" stroke-width="1"/><circle cx="1.5" cy="1.5" r=".8" fill="#d0d088"/></pattern></defs>
<rect x="627" y="262" width="18" height="292" fill="url(#chain)"/>
<rect x="627" y="262" width="18" height="292" fill="#000" opacity=".08"/>
<path d="M628 258 Q626 234 636 219 Q646 234 644 258 Z" fill="#fff" filter="url(#r4)" />
<path d="M632 254 Q632 236 636 224 M640 254 Q640 236 636 224 M636 256 V226" fill="none" stroke="#5a5a2a" stroke-width="1" opacity="0.7"/>
<rect x="627" y="254" width="18" height="9" fill="#c8c882" stroke="#7a7a44" stroke-width=".8"/>
<path d="M660 262 Q650 240 662 226 Q676 214 686 228 Q690 242 678 250 Q668 254 672 262" fill="none" stroke="#8e8e4e" stroke-width="7"/>
<path d="M664 260 Q656 242 664 230 Q674 222 682 232" fill="none" stroke="#cfcf88" stroke-width="2"/>
<path d="M656 262 Q672 250 690 252 L701 258 L701 288 L692 290 L676 280 L660 280 Z" fill="#fff" filter="url(#r3)" />
<path d="M686 228 Q698 232 701 245 L701 262 L690 258 Z" fill="#fff" filter="url(#r2)" />
<path d="M650 272 Q675 266 700 282" fill="none" stroke="#909050" stroke-width="4"/>
<path d="M650 272 Q675 266 700 282" fill="none" stroke="#d8d890" stroke-width="1.5" stroke-dasharray="3 3"/>
<path d="M690 292 L699 290 L700 340 L694 348 L690 320 Z" fill="#fff" filter="url(#r3)" />
<path d="M690 355 L700 352 L701 378 L695 376 Z" fill="#fff" filter="url(#r3)" />
<path d="M645 528 L662 522 L684 532 L682 555 L668 580 L650 582 L640 566 Z" fill="#fff" filter="url(#r3)" />
<defs><linearGradient id="drp" x1="0" y1="0" x2="1" y2="0"><stop offset="0" stop-color="#8c8c4c"/><stop offset="0.5" stop-color="#d0d088"/><stop offset="1" stop-color="#9a9a58"/></linearGradient></defs>
<path d="M701 475 C688 510 680 555 654 586 L664 598 L701 598 Z" fill="url(#drp)" stroke="#5e5e2c" stroke-width=".8"/>
<path d="M699 500 Q692 548 672 588 M697 530 Q690 565 684 594 M700 480 Q700 560 694 596" fill="none" stroke="#66662f" stroke-width="1" opacity=".7"/>
<rect x="645" y="552" width="56" height="4" fill="#c8c882" opacity=".8"/>
<rect x="736" y="242" width="91" height="340" fill="url(#bg)"/>
<g fill="none" stroke="#8e8e50" stroke-linecap="round" transform="translate(0 0)">
<path d="M790 250 Q792 270 784 280 Q770 290 762 300 Q758 318 770 330" stroke-width="7"/>
<path d="M784 282 Q776 300 784 320" stroke-width="4"/>
<path d="M762 300 Q752 312 748 330" stroke-width="4"/>
<path d="M770 358 Q775 380 785 395 Q792 410 790 420" stroke-width="5"/>
<path d="M790 360 Q800 380 806 395" stroke-width="3"/>
<path d="M760 416 Q756 440 770 455 Q772 465 765 470" stroke-width="5"/>
<path d="M795 464 Q800 480 790 500" stroke-width="3"/>
<path d="M750 515 Q752 540 765 555 Q775 570 772 582" stroke-width="5"/>
<path d="M788 536 Q795 555 790 575" stroke-width="3"/>
</g>
<path d="M756 318 L772 310 L780 330 L770 345 L752 340 Z" fill="#fff" filter="url(#r3)" />
<path d="M800 272 L815 262 L826 270 L826 292 L812 300 L800 290 Z" fill="#fff" filter="url(#r3)" />
<path d="M738 330 L752 325 L750 355 L740 350 Z" fill="#fff" filter="url(#r3)" />
<path d="M742 420 L758 418 L762 440 L748 450 Z" fill="#fff" filter="url(#r3)" />
<path d="M800 400 L815 405 L812 425 L800 420 Z" fill="#fff" filter="url(#r3)" />
<path d="M752 540 L772 545 L780 580 L758 580 Z" fill="#fff" filter="url(#r3)" />
<path d="M785 548 L800 552 L798 578 L786 575 Z" fill="#fff" filter="url(#r3)" />
<path d="M760 455 L780 452 L785 470 L765 472 Z" fill="#fff" filter="url(#r3)" />
<path d="M795 460 L812 470 L806 495 L795 490 Z" fill="#fff" filter="url(#r3)" />
<path d="M777 243 Q790 238 801 246 Q806 256 797 262 L792 290 L786 290 L786 262 Q776 256 777 243 Z" fill="#fff" filter="url(#r4)" />
<path d="M797.0 292.1 C811.4 281.4 823.4 301.2 820.0 333.1 C818.6 346.8 821.0 354.4 815.2 355.9 L801.8 358.2 L794.6 362.0 C782.6 355.9 772.0 348.3 773.0 327.8 C774.0 301.2 785.0 283.0 797.0 292.1 Z" fill="url(#pch)" stroke="#66662f" stroke-width="1"/>
<path d="M793.0 295.1 q4 -6 9 -1 q-2 6 -9 1 z" fill="#d8d890" stroke="#66662f" stroke-width=".8"/>
<path d="M760.0 359.1 C774.4 350.2 786.4 366.8 783.0 393.7 C781.6 405.2 784.0 411.6 778.2 412.9 L764.8 414.8 L757.6 418.0 C745.6 412.9 735.0 406.5 736.0 389.2 C737.0 366.8 748.0 351.4 760.0 359.1 Z" fill="url(#pch)" stroke="#66662f" stroke-width="1"/>
<path d="M756.0 361.7 q4 -6 9 -1 q-2 6 -9 1 z" fill="#d8d890" stroke="#66662f" stroke-width=".8"/>
<path d="M791.0 420.0 C803.0 413.0 813.0 426.0 810.2 447.0 C809.0 456.0 811.0 461.0 806.2 462.0 L795.0 463.5 L789.0 466.0 C779.0 462.0 770.2 457.0 771.0 443.5 C771.8 426.0 781.0 414.0 791.0 420.0 Z" fill="url(#pch)" stroke="#66662f" stroke-width="1"/>
<path d="M787.0 422.0 q4 -6 9 -1 q-2 6 -9 1 z" fill="#d8d890" stroke="#66662f" stroke-width=".8"/>
<path d="M762.0 468.3 C775.2 460.8 786.2 474.8 783.1 497.5 C781.8 507.2 784.0 512.6 778.7 513.7 L766.4 515.3 L759.8 518.0 C748.8 513.7 739.1 508.3 740.0 493.7 C740.9 474.8 751.0 461.8 762.0 468.3 Z" fill="url(#pch)" stroke="#66662f" stroke-width="1"/>
<path d="M758.0 470.5 q4 -6 9 -1 q-2 6 -9 1 z" fill="#d8d890" stroke="#66662f" stroke-width=".8"/>
<path d="M788.0 501.4 C801.2 495.5 812.2 506.4 809.1 524.0 C807.8 531.6 810.0 535.8 804.7 536.6 L792.4 537.9 L785.8 540.0 C774.8 536.6 765.1 532.4 766.0 521.1 C766.9 506.4 777.0 496.3 788.0 501.4 Z" fill="url(#pch)" stroke="#66662f" stroke-width="1"/>
<path d="M784.0 503.0 q4 -6 9 -1 q-2 6 -9 1 z" fill="#d8d890" stroke="#66662f" stroke-width=".8"/>
<rect x="871" y="254" width="93" height="340" fill="url(#bg)"/>
<clipPath id="c5"><path d="M886 300 L900 278 L920 262 L935 265 L945 285 L958 300 L962 340 L958 400 L952 450 L947 480 L956 520 L962 560 L955 585 L935 594 L905 594 L892 575 L885 540 L880 500 L875 460 L878 420 L883 360 Z"/></clipPath>
<g filter="url(#wav)">
<path d="M886 300 L900 278 L920 262 L935 265 L945 285 L958 300 L962 340 L958 400 L952 450 L947 480 L956 520 L962 560 L955 585 L935 594 L905 594 L892 575 L885 540 L880 500 L875 460 L878 420 L883 360 Z" fill="#a2a25c"/>
<g clip-path="url(#c5)">
<path d="M916 253.0 Q935 257.0 966 265.0" fill="none" stroke="#d2d28a" stroke-width="2.4"/>
<path d="M916 249.0 Q935 253.0 966 261.0" fill="none" stroke="#56562a" stroke-width="1.1" opacity=".85"/>
<path d="M914 251.0 Q898 254.0 870 261.0" fill="none" stroke="#d2d28a" stroke-width="2.4"/>
<path d="M914 247.0 Q898 250.0 870 257.0" fill="none" stroke="#56562a" stroke-width="1.1" opacity=".85"/>
<path d="M916 261.5 Q935 265.5 966 273.5" fill="none" stroke="#d2d28a" stroke-width="2.4"/>
<path d="M916 257.5 Q935 261.5 966 269.5" fill="none" stroke="#56562a" stroke-width="1.1" opacity=".85"/>
<path d="M914 259.5 Q898 262.5 870 269.5" fill="none" stroke="#d2d28a" stroke-width="2.4"/>
<path d="M914 255.5 Q898 258.5 870 265.5" fill="none" stroke="#56562a" stroke-width="1.1" opacity=".85"/>
<path d="M916 270.0 Q935 274.0 966 282.0" fill="none" stroke="#d2d28a" stroke-width="2.4"/>
<path d="M916 266.0 Q935 270.0 966 278.0" fill="none" stroke="#56562a" stroke-width="1.1" opacity=".85"/>
<path d="M914 268.0 Q898 271.0 870 278.0" fill="none" stroke="#d2d28a" stroke-width="2.4"/>
<path d="M914 264.0 Q898 267.0 870 274.0" fill="none" stroke="#56562a" stroke-width="1.1" opacity=".85"/>
<path d="M916 278.5 Q935 282.5 966 290.5" fill="none" stroke="#d2d28a" stroke-width="2.4"/>
<path d="M916 274.5 Q935 278.5 966 286.5" fill="none" stroke="#56562a" stroke-width="1.1" opacity=".85"/>
<path d="M914 276.5 Q898 279.5 870 286.5" fill="none" stroke="#d2d28a" stroke-width="2.4"/>
<path d="M914 272.5 Q898 275.5 870 282.5" fill="none" stroke="#56562a" stroke-width="1.1" opacity=".85"/>
<path d="M916 287.0 Q935 291.0 966 299.0" fill="none" stroke="#d2d28a" stroke-width="2.4"/>
<path d="M916 283.0 Q935 287.0 966 295.0" fill="none" stroke="#56562a" stroke-width="1.1" opacity=".85"/>
<path d="M914 285.0 Q898 288.0 870 295.0" fill="none" stroke="#d2d28a" stroke-width="2.4"/>
<path d="M914 281.0 Q898 284.0 870 291.0" fill="none" stroke="#56562a" stroke-width="1.1" opacity=".85"/>
<path d="M916 295.5 Q935 299.5 966 307.5" fill="none" stroke="#d2d28a" stroke-width="2.4"/>
<path d="M916 291.5 Q935 295.5 966 303.5" fill="none" stroke="#56562a" stroke-width="1.1" opacity=".85"/>
<path d="M914 293.5 Q898 296.5 870 303.5" fill="none" stroke="#d2d28a" stroke-width="2.4"/>
<path d="M914 289.5 Q898 292.5 870 299.5" fill="none" stroke="#56562a" stroke-width="1.1" opacity=".85"/>
<path d="M916 304.0 Q935 308.0 966 316.0" fill="none" stroke="#d2d28a" stroke-width="2.4"/>
<path d="M916 300.0 Q935 304.0 966 312.0" fill="none" stroke="#56562a" stroke-width="1.1" opacity=".85"/>
<path d="M914 302.0 Q898 305.0 870 312.0" fill="none" stroke="#d2d28a" stroke-width="2.4"/>
<path d="M914 298.0 Q898 301.0 870 308.0" fill="none" stroke="#56562a" stroke-width="1.1" opacity=".85"/>
<path d="M916 312.5 Q935 316.5 966 324.5" fill="none" stroke="#d2d28a" stroke-width="2.4"/>
<path d="M916 308.5 Q935 312.5 966 320.5" fill="none" stroke="#56562a" stroke-width="1.1" opacity=".85"/>
<path d="M914 310.5 Q898 313.5 870 320.5" fill="none" stroke="#d2d28a" stroke-width="2.4"/>
<path d="M914 306.5 Q898 309.5 870 316.5" fill="none" stroke="#56562a" stroke-width="1.1" opacity=".85"/>
<path d="M916 321.0 Q935 325.0 966 333.0" fill="none" stroke="#d2d28a" stroke-width="2.4"/>
<path d="M916 317.0 Q935 321.0 966 329.0" fill="none" stroke="#56562a" stroke-width="1.1" opacity=".85"/>
<path d="M914 319.0 Q898 322.0 870 329.0" fill="none" stroke="#d2d28a" stroke-width="2.4"/>
<path d="M914 315.0 Q898 318.0 870 325.0" fill="none" stroke="#56562a" stroke-width="1.1" opacity=".85"/>
<path d="M916 329.5 Q935 333.5 966 341.5" fill="none" stroke="#d2d28a" stroke-width="2.4"/>
<path d="M916 325.5 Q935 329.5 966 337.5" fill="none" stroke="#56562a" stroke-width="1.1" opacity=".85"/>
<path d="M914 327.5 Q898 330.5 870 337.5" fill="none" stroke="#d2d28a" stroke-width="2.4"/>
<path d="M914 323.5 Q898 326.5 870 333.5" fill="none" stroke="#56562a" stroke-width="1.1" opacity=".85"/>
<path d="M916 338.0 Q935 342.0 966 350.0" fill="none" stroke="#d2d28a" stroke-width="2.4"/>
<path d="M916 334.0 Q935 338.0 966 346.0" fill="none" stroke="#56562a" stroke-width="1.1" opacity=".85"/>
<path d="M914 336.0 Q898 339.0 870 346.0" fill="none" stroke="#d2d28a" stroke-width="2.4"/>
<path d="M914 332.0 Q898 335.0 870 342.0" fill="none" stroke="#56562a" stroke-width="1.1" opacity=".85"/>
<path d="M916 346.5 Q935 350.5 966 358.5" fill="none" stroke="#d2d28a" stroke-width="2.4"/>
<path d="M916 342.5 Q935 346.5 966 354.5" fill="none" stroke="#56562a" stroke-width="1.1" opacity=".85"/>
<path d="M914 344.5 Q898 347.5 870 354.5" fill="none" stroke="#d2d28a" stroke-width="2.4"/>
<path d="M914 340.5 Q898 343.5 870 350.5" fill="none" stroke="#56562a" stroke-width="1.1" opacity=".85"/>
<path d="M916 355.0 Q935 359.0 966 367.0" fill="none" stroke="#d2d28a" stroke-width="2.4"/>
<path d="M916 351.0 Q935 355.0 966 363.0" fill="none" stroke="#56562a" stroke-width="1.1" opacity=".85"/>
<path d="M914 353.0 Q898 356.0 870 363.0" fill="none" stroke="#d2d28a" stroke-width="2.4"/>
<path d="M914 349.0 Q898 352.0 870 359.0" fill="none" stroke="#56562a" stroke-width="1.1" opacity=".85"/>
<path d="M916 363.5 Q935 367.5 966 375.5" fill="none" stroke="#d2d28a" stroke-width="2.4"/>
<path d="M916 359.5 Q935 363.5 966 371.5" fill="none" stroke="#56562a" stroke-width="1.1" opacity=".85"/>
<path d="M914 361.5 Q898 364.5 870 371.5" fill="none" stroke="#d2d28a" stroke-width="2.4"/>
<path d="M914 357.5 Q898 360.5 870 367.5" fill="none" stroke="#56562a" stroke-width="1.1" opacity=".85"/>
<path d="M916 372.0 Q935 376.0 966 384.0" fill="none" stroke="#d2d28a" stroke-width="2.4"/>
<path d="M916 368.0 Q935 372.0 966 380.0" fill="none" stroke="#56562a" stroke-width="1.1" opacity=".85"/>
<path d="M914 370.0 Q898 373.0 870 380.0" fill="none" stroke="#d2d28a" stroke-width="2.4"/>
<path d="M914 366.0 Q898 369.0 870 376.0" fill="none" stroke="#56562a" stroke-width="1.1" opacity=".85"/>
<path d="M916 380.5 Q935 384.5 966 392.5" fill="none" stroke="#d2d28a" stroke-width="2.4"/>
<path d="M916 376.5 Q935 380.5 966 388.5" fill="none" stroke="#56562a" stroke-width="1.1" opacity=".85"/>
<path d="M914 378.5 Q898 381.5 870 388.5" fill="none" stroke="#d2d28a" stroke-width="2.4"/>
<path d="M914 374.5 Q898 377.5 870 384.5" fill="none" stroke="#56562a" stroke-width="1.1" opacity=".85"/>
<path d="M916 389.0 Q935 393.0 966 401.0" fill="none" stroke="#d2d28a" stroke-width="2.4"/>
<path d="M916 385.0 Q935 389.0 966 397.0" fill="none" stroke="#56562a" stroke-width="1.1" opacity=".85"/>
<path d="M914 387.0 Q898 390.0 870 397.0" fill="none" stroke="#d2d28a" stroke-width="2.4"/>
<path d="M914 383.0 Q898 386.0 870 393.0" fill="none" stroke="#56562a" stroke-width="1.1" opacity=".85"/>
<path d="M916 397.5 Q935 401.5 966 409.5" fill="none" stroke="#d2d28a" stroke-width="2.4"/>
<path d="M916 393.5 Q935 397.5 966 405.5" fill="none" stroke="#56562a" stroke-width="1.1" opacity=".85"/>
<path d="M914 395.5 Q898 398.5 870 405.5" fill="none" stroke="#d2d28a" stroke-width="2.4"/>
<path d="M914 391.5 Q898 394.5 870 401.5" fill="none" stroke="#56562a" stroke-width="1.1" opacity=".85"/>
<path d="M916 406.0 Q935 410.0 966 418.0" fill="none" stroke="#d2d28a" stroke-width="2.4"/>
<path d="M916 402.0 Q935 406.0 966 414.0" fill="none" stroke="#56562a" stroke-width="1.1" opacity=".85"/>
<path d="M914 404.0 Q898 407.0 870 414.0" fill="none" stroke="#d2d28a" stroke-width="2.4"/>
<path d="M914 400.0 Q898 403.0 870 410.0" fill="none" stroke="#56562a" stroke-width="1.1" opacity=".85"/>
<path d="M916 414.5 Q935 418.5 966 426.5" fill="none" stroke="#d2d28a" stroke-width="2.4"/>
<path d="M916 410.5 Q935 414.5 966 422.5" fill="none" stroke="#56562a" stroke-width="1.1" opacity=".85"/>
<path d="M914 412.5 Q898 415.5 870 422.5" fill="none" stroke="#d2d28a" stroke-width="2.4"/>
<path d="M914 408.5 Q898 411.5 870 418.5" fill="none" stroke="#56562a" stroke-width="1.1" opacity=".85"/>
<path d="M916 423.0 Q935 427.0 966 435.0" fill="none" stroke="#d2d28a" stroke-width="2.4"/>
<path d="M916 419.0 Q935 423.0 966 431.0" fill="none" stroke="#56562a" stroke-width="1.1" opacity=".85"/>
<path d="M914 421.0 Q898 424.0 870 431.0" fill="none" stroke="#d2d28a" stroke-width="2.4"/>
<path d="M914 417.0 Q898 420.0 870 427.0" fill="none" stroke="#56562a" stroke-width="1.1" opacity=".85"/>
<path d="M916 431.5 Q935 435.5 966 443.5" fill="none" stroke="#d2d28a" stroke-width="2.4"/>
<path d="M916 427.5 Q935 431.5 966 439.5" fill="none" stroke="#56562a" stroke-width="1.1" opacity=".85"/>
<path d="M914 429.5 Q898 432.5 870 439.5" fill="none" stroke="#d2d28a" stroke-width="2.4"/>
<path d="M914 425.5 Q898 428.5 870 435.5" fill="none" stroke="#56562a" stroke-width="1.1" opacity=".85"/>
<path d="M916 440.0 Q935 444.0 966 452.0" fill="none" stroke="#d2d28a" stroke-width="2.4"/>
<path d="M916 436.0 Q935 440.0 966 448.0" fill="none" stroke="#56562a" stroke-width="1.1" opacity=".85"/>
<path d="M914 438.0 Q898 441.0 870 448.0" fill="none" stroke="#d2d28a" stroke-width="2.4"/>
<path d="M914 434.0 Q898 437.0 870 444.0" fill="none" stroke="#56562a" stroke-width="1.1" opacity=".85"/>
<path d="M916 448.5 Q935 452.5 966 460.5" fill="none" stroke="#d2d28a" stroke-width="2.4"/>
<path d="M916 444.5 Q935 448.5 966 456.5" fill="none" stroke="#56562a" stroke-width="1.1" opacity=".85"/>
<path d="M914 446.5 Q898 449.5 870 456.5" fill="none" stroke="#d2d28a" stroke-width="2.4"/>
<path d="M914 442.5 Q898 445.5 870 452.5" fill="none" stroke="#56562a" stroke-width="1.1" opacity=".85"/>
<path d="M916 457.0 Q935 461.0 966 469.0" fill="none" stroke="#d2d28a" stroke-width="2.4"/>
<path d="M916 453.0 Q935 457.0 966 465.0" fill="none" stroke="#56562a" stroke-width="1.1" opacity=".85"/>
<path d="M914 455.0 Q898 458.0 870 465.0" fill="none" stroke="#d2d28a" stroke-width="2.4"/>
<path d="M914 451.0 Q898 454.0 870 461.0" fill="none" stroke="#56562a" stroke-width="1.1" opacity=".85"/>
<path d="M916 465.5 Q935 469.5 966 477.5" fill="none" stroke="#d2d28a" stroke-width="2.4"/>
<path d="M916 461.5 Q935 465.5 966 473.5" fill="none" stroke="#56562a" stroke-width="1.1" opacity=".85"/>
<path d="M914 463.5 Q898 466.5 870 473.5" fill="none" stroke="#d2d28a" stroke-width="2.4"/>
<path d="M914 459.5 Q898 462.5 870 469.5" fill="none" stroke="#56562a" stroke-width="1.1" opacity=".85"/>
<path d="M916 474.0 Q935 478.0 966 486.0" fill="none" stroke="#d2d28a" stroke-width="2.4"/>
<path d="M916 470.0 Q935 474.0 966 482.0" fill="none" stroke="#56562a" stroke-width="1.1" opacity=".85"/>
<path d="M914 472.0 Q898 475.0 870 482.0" fill="none" stroke="#d2d28a" stroke-width="2.4"/>
<path d="M914 468.0 Q898 471.0 870 478.0" fill="none" stroke="#56562a" stroke-width="1.1" opacity=".85"/>
<path d="M916 482.5 Q935 486.5 966 494.5" fill="none" stroke="#d2d28a" stroke-width="2.4"/>
<path d="M916 478.5 Q935 482.5 966 490.5" fill="none" stroke="#56562a" stroke-width="1.1" opacity=".85"/>
<path d="M914 480.5 Q898 483.5 870 490.5" fill="none" stroke="#d2d28a" stroke-width="2.4"/>
<path d="M914 476.5 Q898 479.5 870 486.5" fill="none" stroke="#56562a" stroke-width="1.1" opacity=".85"/>
<path d="M916 491.0 Q935 495.0 966 503.0" fill="none" stroke="#d2d28a" stroke-width="2.4"/>
<path d="M916 487.0 Q935 491.0 966 499.0" fill="none" stroke="#56562a" stroke-width="1.1" opacity=".85"/>
<path d="M914 489.0 Q898 492.0 870 499.0" fill="none" stroke="#d2d28a" stroke-width="2.4"/>
<path d="M914 485.0 Q898 488.0 870 495.0" fill="none" stroke="#56562a" stroke-width="1.1" opacity=".85"/>
<path d="M916 499.5 Q935 503.5 966 511.5" fill="none" stroke="#d2d28a" stroke-width="2.4"/>
<path d="M916 495.5 Q935 499.5 966 507.5" fill="none" stroke="#56562a" stroke-width="1.1" opacity=".85"/>
<path d="M914 497.5 Q898 500.5 870 507.5" fill="none" stroke="#d2d28a" stroke-width="2.4"/>
<path d="M914 493.5 Q898 496.5 870 503.5" fill="none" stroke="#56562a" stroke-width="1.1" opacity=".85"/>
<path d="M916 508.0 Q935 512.0 966 520.0" fill="none" stroke="#d2d28a" stroke-width="2.4"/>
<path d="M916 504.0 Q935 508.0 966 516.0" fill="none" stroke="#56562a" stroke-width="1.1" opacity=".85"/>
<path d="M914 506.0 Q898 509.0 870 516.0" fill="none" stroke="#d2d28a" stroke-width="2.4"/>
<path d="M914 502.0 Q898 505.0 870 512.0" fill="none" stroke="#56562a" stroke-width="1.1" opacity=".85"/>
<path d="M916 516.5 Q935 520.5 966 528.5" fill="none" stroke="#d2d28a" stroke-width="2.4"/>
<path d="M916 512.5 Q935 516.5 966 524.5" fill="none" stroke="#56562a" stroke-width="1.1" opacity=".85"/>
<path d="M914 514.5 Q898 517.5 870 524.5" fill="none" stroke="#d2d28a" stroke-width="2.4"/>
<path d="M914 510.5 Q898 513.5 870 520.5" fill="none" stroke="#56562a" stroke-width="1.1" opacity=".85"/>
<path d="M916 525.0 Q935 529.0 966 537.0" fill="none" stroke="#d2d28a" stroke-width="2.4"/>
<path d="M916 521.0 Q935 525.0 966 533.0" fill="none" stroke="#56562a" stroke-width="1.1" opacity=".85"/>
<path d="M914 523.0 Q898 526.0 870 533.0" fill="none" stroke="#d2d28a" stroke-width="2.4"/>
<path d="M914 519.0 Q898 522.0 870 529.0" fill="none" stroke="#56562a" stroke-width="1.1" opacity=".85"/>
<path d="M916 533.5 Q935 537.5 966 545.5" fill="none" stroke="#d2d28a" stroke-width="2.4"/>
<path d="M916 529.5 Q935 533.5 966 541.5" fill="none" stroke="#56562a" stroke-width="1.1" opacity=".85"/>
<path d="M914 531.5 Q898 534.5 870 541.5" fill="none" stroke="#d2d28a" stroke-width="2.4"/>
<path d="M914 527.5 Q898 530.5 870 537.5" fill="none" stroke="#56562a" stroke-width="1.1" opacity=".85"/>
<path d="M916 542.0 Q935 546.0 966 554.0" fill="none" stroke="#d2d28a" stroke-width="2.4"/>
<path d="M916 538.0 Q935 542.0 966 550.0" fill="none" stroke="#56562a" stroke-width="1.1" opacity=".85"/>
<path d="M914 540.0 Q898 543.0 870 550.0" fill="none" stroke="#d2d28a" stroke-width="2.4"/>
<path d="M914 536.0 Q898 539.0 870 546.0" fill="none" stroke="#56562a" stroke-width="1.1" opacity=".85"/>
<path d="M916 550.5 Q935 554.5 966 562.5" fill="none" stroke="#d2d28a" stroke-width="2.4"/>
<path d="M916 546.5 Q935 550.5 966 558.5" fill="none" stroke="#56562a" stroke-width="1.1" opacity=".85"/>
<path d="M914 548.5 Q898 551.5 870 558.5" fill="none" stroke="#d2d28a" stroke-width="2.4"/>
<path d="M914 544.5 Q898 547.5 870 554.5" fill="none" stroke="#56562a" stroke-width="1.1" opacity=".85"/>
<path d="M916 559.0 Q935 563.0 966 571.0" fill="none" stroke="#d2d28a" stroke-width="2.4"/>
<path d="M916 555.0 Q935 559.0 966 567.0" fill="none" stroke="#56562a" stroke-width="1.1" opacity=".85"/>
<path d="M914 557.0 Q898 560.0 870 567.0" fill="none" stroke="#d2d28a" stroke-width="2.4"/>
<path d="M914 553.0 Q898 556.0 870 563.0" fill="none" stroke="#56562a" stroke-width="1.1" opacity=".85"/>
<path d="M916 567.5 Q935 571.5 966 579.5" fill="none" stroke="#d2d28a" stroke-width="2.4"/>
<path d="M916 563.5 Q935 567.5 966 575.5" fill="none" stroke="#56562a" stroke-width="1.1" opacity=".85"/>
<path d="M914 565.5 Q898 568.5 870 575.5" fill="none" stroke="#d2d28a" stroke-width="2.4"/>
<path d="M914 561.5 Q898 564.5 870 571.5" fill="none" stroke="#56562a" stroke-width="1.1" opacity=".85"/>
<path d="M916 576.0 Q935 580.0 966 588.0" fill="none" stroke="#d2d28a" stroke-width="2.4"/>
<path d="M916 572.0 Q935 576.0 966 584.0" fill="none" stroke="#56562a" stroke-width="1.1" opacity=".85"/>
<path d="M914 574.0 Q898 577.0 870 584.0" fill="none" stroke="#d2d28a" stroke-width="2.4"/>
<path d="M914 570.0 Q898 573.0 870 580.0" fill="none" stroke="#56562a" stroke-width="1.1" opacity=".85"/>
<path d="M916 584.5 Q935 588.5 966 596.5" fill="none" stroke="#d2d28a" stroke-width="2.4"/>
<path d="M916 580.5 Q935 584.5 966 592.5" fill="none" stroke="#56562a" stroke-width="1.1" opacity=".85"/>
<path d="M914 582.5 Q898 585.5 870 592.5" fill="none" stroke="#d2d28a" stroke-width="2.4"/>
<path d="M914 578.5 Q898 581.5 870 588.5" fill="none" stroke="#56562a" stroke-width="1.1" opacity=".85"/>
<path d="M916 593.0 Q935 597.0 966 605.0" fill="none" stroke="#d2d28a" stroke-width="2.4"/>
<path d="M916 589.0 Q935 593.0 966 601.0" fill="none" stroke="#56562a" stroke-width="1.1" opacity=".85"/>
<path d="M914 591.0 Q898 594.0 870 601.0" fill="none" stroke="#d2d28a" stroke-width="2.4"/>
<path d="M914 587.0 Q898 590.0 870 597.0" fill="none" stroke="#56562a" stroke-width="1.1" opacity=".85"/>
<path d="M916 601.5 Q935 605.5 966 613.5" fill="none" stroke="#d2d28a" stroke-width="2.4"/>
<path d="M916 597.5 Q935 601.5 966 609.5" fill="none" stroke="#56562a" stroke-width="1.1" opacity=".85"/>
<path d="M914 599.5 Q898 602.5 870 609.5" fill="none" stroke="#d2d28a" stroke-width="2.4"/>
<path d="M914 595.5 Q898 598.5 870 605.5" fill="none" stroke="#56562a" stroke-width="1.1" opacity=".85"/>
<path d="M916 610.0 Q935 614.0 966 622.0" fill="none" stroke="#d2d28a" stroke-width="2.4"/>
<path d="M916 606.0 Q935 610.0 966 618.0" fill="none" stroke="#56562a" stroke-width="1.1" opacity=".85"/>
<path d="M914 608.0 Q898 611.0 870 618.0" fill="none" stroke="#d2d28a" stroke-width="2.4"/>
<path d="M914 604.0 Q898 607.0 870 614.0" fill="none" stroke="#56562a" stroke-width="1.1" opacity=".85"/>
<path d="M916 618.5 Q935 622.5 966 630.5" fill="none" stroke="#d2d28a" stroke-width="2.4"/>
<path d="M916 614.5 Q935 618.5 966 626.5" fill="none" stroke="#56562a" stroke-width="1.1" opacity=".85"/>
<path d="M914 616.5 Q898 619.5 870 626.5" fill="none" stroke="#d2d28a" stroke-width="2.4"/>
<path d="M914 612.5 Q898 615.5 870 622.5" fill="none" stroke="#56562a" stroke-width="1.1" opacity=".85"/>
<path d="M916 627.0 Q935 631.0 966 639.0" fill="none" stroke="#d2d28a" stroke-width="2.4"/>
<path d="M916 623.0 Q935 627.0 966 635.0" fill="none" stroke="#56562a" stroke-width="1.1" opacity=".85"/>
<path d="M914 625.0 Q898 628.0 870 635.0" fill="none" stroke="#d2d28a" stroke-width="2.4"/>
<path d="M914 621.0 Q898 624.0 870 631.0" fill="none" stroke="#56562a" stroke-width="1.1" opacity=".85"/>
<path d="M916 635.5 Q935 639.5 966 647.5" fill="none" stroke="#d2d28a" stroke-width="2.4"/>
<path d="M916 631.5 Q935 635.5 966 643.5" fill="none" stroke="#56562a" stroke-width="1.1" opacity=".85"/>
<path d="M914 633.5 Q898 636.5 870 643.5" fill="none" stroke="#d2d28a" stroke-width="2.4"/>
<path d="M914 629.5 Q898 632.5 870 639.5" fill="none" stroke="#56562a" stroke-width="1.1" opacity=".85"/>
</g>
<path d="M916 300 Q918 420 910 520 L916 590" fill="none" stroke="#e0e098" stroke-width="2.5"/>
</g>
<path d="M927.5 287.2 L915.6 290.4 L918.2 302.3 L907.1 297.2 L901.3 308.0 L896.1 296.9 L884.8 301.5 L887.9 289.6 L876.3 285.9 L886.3 278.8 L879.8 268.4 L892.0 269.5 L893.7 257.3 L902.4 266.0 L911.5 257.8 L912.6 270.0 L924.8 269.6 L917.8 279.6 Z" fill="#fff" filter="url(#r3)" />
<path d="M917.3 324.7 L909.4 323.5 L908.9 331.4 L904.3 325.0 L898.3 330.3 L899.5 322.4 L891.6 321.9 L898.0 317.3 L892.7 311.3 L900.6 312.5 L901.1 304.6 L905.7 311.0 L911.7 305.7 L910.5 313.6 L918.4 314.1 L912.0 318.7 Z" fill="#fff" filter="url(#r3)" />
<path d="M925 285 Q945 272 962 274 Q950 292 935 300 Z" fill="#fff" filter="url(#r1)" />
<path d="M930 300 L958 300 L962 345 L945 350 L932 330 Z" fill="#fff" filter="url(#r1)" />
<path d="M884 320 L905 315 L908 345 L890 350 Z" fill="#fff" filter="url(#r3)" />
<path d="M935 400 L960 410 L955 450 L938 440 Z" fill="#fff" filter="url(#r3)" />
<path d="M880 430 L900 420 L898 470 L884 480 Z" fill="#fff" filter="url(#r3)" />
<path d="M930 560 L958 555 L962 585 L940 594 Z" fill="#fff" filter="url(#r1)" />
<path d="M871 500 L880 500 L885 540 L892 575 L905 594 L871 594 Z" fill="#f4f4ac"/>
<g transform="translate(917 336)"><path d="M-8 -9 H7 M-9 -3 H8 M-2 -10 V10 M5 -7 L-7 9 M-7 -6 L6 8 M-6 4 H6" fill="none" stroke="#f6f6b0" stroke-width="3.4" stroke-linecap="square"/></g>
<g transform="translate(922 368)"><path d="M-8 -8 L-3 -3 M-8 0 H-2 V9 M2 -9 V6 Q2 9 8 8 M2 -2 H8 V4" fill="none" stroke="#f6f6b0" stroke-width="3.4" stroke-linecap="square"/></g>
<g transform="translate(917 403)"><path d="M0 -10 V-7 M-8 -6 V-3 M-8 -6 H8 V-3 M-6 0 H7 L-4 9 M-6 4 L6 9" fill="none" stroke="#f6f6b0" stroke-width="3.4" stroke-linecap="square"/></g>
<g transform="translate(914 436)"><path d="M-7 -9 H7 V-3 H-7 Z M-8 0 H8 M0 -3 V9 M-6 5 H6 M-6 9 H6" fill="none" stroke="#f6f6b0" stroke-width="3.4" stroke-linecap="square"/></g>
<g transform="translate(912 470)"><path d="M-8 -8 H-2 M-5 -8 V0 M-8 0 H-1 M-8 8 L-2 2 M2 -9 L8 -3 M2 0 H8 M5 -3 V9 M2 9 H8" fill="none" stroke="#f6f6b0" stroke-width="3.4" stroke-linecap="square"/></g>
<g transform="translate(910 507)"><path d="M-8 -8 L-3 -3 M-8 0 H-2 V9 M1 -9 H8 M1 -3 H8 M3 -9 L3 3 M1 3 H8 V9 H1 Z" fill="none" stroke="#f6f6b0" stroke-width="3.4" stroke-linecap="square"/></g>
<g transform="translate(917 541)"><path d="M-7 -9 H7 M0 -9 V-2 M-8 -2 H8 M-6 2 H6 V9 H-6 Z M0 2 V9" fill="none" stroke="#f6f6b0" stroke-width="3.4" stroke-linecap="square"/></g>
<path d="M874 303.5 L869.5 303.5 L869.5 385 L874 385" fill="none" stroke="#0000e0" stroke-width="1.2"/>
<rect x="127.5" y="577.5" width="48" height="48" fill="none" stroke="#00c000" stroke-width="1"/>
<path d="M124 560 L127.5 567 L131 560 M127.5 567 V577" fill="none" stroke="#00e000" stroke-width="1.2"/>
<path d="M125 587 L127.5 579 L130 587" fill="none" stroke="#00e000" stroke-width="1.2"/>
<path d="M166 622.5 L175 625.5 L166 628.5" fill="none" stroke="#ff0000" stroke-width="1.1"/>
<path d="M183.5 620 L190.5 632 M190.5 620 L183.5 632" stroke="#ff0000" stroke-width="1.2"/>
</svg>
<svg class="a" style="left:0;top:0" width="1360" height="728" viewBox="0 0 1360 728">
<path d="M18.5 50.5 H25.5 L28.5 53.5 V62.5 H18.5 Z" fill="#fff" stroke="#000"/><path d="M25.5 50.5 V53.5 H28.5" fill="none" stroke="#000"/>
<path d="M45.5 53.5 H50 L51.5 55 H56 V57 H49 L45.5 62.5 Z" fill="#ffff80" stroke="#000"/><path d="M45.5 62.5 L49 57.5 H60 L56.5 62.5 Z" fill="#808000" stroke="#000"/><path d="M53 52 Q56 48 59 51" fill="none" stroke="#000"/><path d="M57.5 50 L59.5 52 L60 49.5Z" fill="#000"/>
<rect x="74.5" y="50.5" width="13" height="13" fill="#808000" stroke="#000"/><rect x="77" y="51" width="8" height="5" fill="#fff"/><rect x="77" y="59" width="8" height="4.5" fill="#000"/><rect x="82" y="60" width="2" height="3" fill="#fff"/>
<path d="M107 58.5 H124 M115.5 50 V67" stroke="#0000ff" stroke-dasharray="2 1.5"/><path d="M112 58.5 H119 M115.5 55 V62" stroke="#0000ff"/>
<rect x="131.5" y="45.5" width="43" height="25" rx="3.5" fill="#dcdcdc" stroke="#7a7a7a"/><rect x="132.5" y="46.5" width="27" height="23" rx="2.5" fill="#e6e6e6"/><path d="M159.5 46 V70" stroke="#8a8a8a"/>
<rect x="140.5" y="51.5" width="14" height="14" fill="none" stroke="#0000ff" stroke-width="1.2"/><path d="M141 52 L154 65 M154 52 L141 65" stroke="#0000ff"/>
<path d="M164 56 H171 L167.5 60 Z" fill="#000"/>
<path d="M190 57 Q193 53 196 55 Q199 58 195 62" fill="none" stroke="#a0a0a0" stroke-width="1.6"/><path d="M187 56 L192 55 L190 60 Z" fill="#a0a0a0"/>
<path d="M227 57 Q224 53 221 55 Q218 58 222 62" fill="none" stroke="#a0a0a0" stroke-width="1.6"/><path d="M230 56 L225 55 L227 60 Z" fill="#a0a0a0"/>
<path d="M253 52 L266 65 M266 52 L254 64" stroke="#900000" stroke-width="2.3"/>
<path d="M285 51 L290 59 M292 51 L287 59" stroke="#a0a0a0"/><circle cx="286" cy="62" r="2" fill="none" stroke="#a0a0a0"/><circle cx="291" cy="62" r="2" fill="none" stroke="#a0a0a0"/>
<path d="M309.5 52.5 H315 L317 54.5 V61.5 H309.5 Z M315.5 56.5 H321 L323 58.5 V65.5 H315.5 Z" fill="#f0f0f0" stroke="#a0a0a0"/><path d="M311 56 H315 M311 58 H315 M317 60 H321 M317 62 H321" stroke="#a0a0a0"/>
<rect x="339.5" y="53.5" width="11" height="11" fill="#808060" stroke="#000"/><rect x="342" y="51" width="6" height="3" fill="#ffff00" stroke="#000" stroke-width=".6"/><rect x="345.5" y="57.5" width="9" height="8" fill="#fff" stroke="#00008a"/><path d="M347 60 H353 M347 62 H353" stroke="#00008a"/>
<path d="M375 54 L378 51 H389 L384 54 Z" fill="#fffff0"/><rect x="375" y="54" width="9" height="11" fill="#00ffff"/><path d="M384 54 L389 51 V62 L384 65 Z" fill="#0000ff"/>
<path d="M400 56 H407 L403.5 60 Z" fill="#222"/><path d="M444 56 H451 L447.5 60 Z" fill="#222"/>
<path d="M418.5 55.5 L422.5 51.5 H433.5 L429.5 55.5 Z" fill="#800080" stroke="#000"/><path d="M418.5 55.5 H429.5 V65.5 H418.5 Z M429.5 65.5 L433.5 61.5 V51.5" fill="none" stroke="#000"/><path d="M422.5 55.5 V61.5 H433.5 M418.5 65.5 L422.5 61.5" fill="none" stroke="#000" stroke-width=".6"/>
<path d="M466 48 H484 V59 H482 A9 9 0 0 1 466 59 Z" fill="#a0a0a0"/><path d="M468 59 A7 7 0 0 1 482 59 Z" fill="#f0f0f0"/>
<path d="M495 48 H513 V59 H511 A8 8 0 0 1 497 59 H495 Z" fill="#a0a0a0"/><path d="M511 59 A8 9 0 0 1 497 59 Z" fill="#a0a0a0"/>
<path d="M698 57.5 H709 M703.5 52 V63" stroke="#000" stroke-width="1.2"/><circle cx="703.5" cy="57.5" r="1.5" fill="#000"/>
<path d="M726.5 53 V62 M739.5 53 V62 M727 57.5 H739 M727 57.5 L730 55.5 M727 57.5 L730 59.5 M739 57.5 L736 55.5 M739 57.5 L736 59.5" stroke="#000" stroke-width="1.1" fill="none"/>
<path d="M756 54 H768.5 V65 M756 54 V59 H764 V65 M757 54 L759 52 M768.5 65 L766.5 63 M768.5 65 L770.5 63" stroke="#000" fill="none"/>
<rect x="781.5" y="55.5" width="14" height="10" fill="none" stroke="#000"/><path d="M781.5 50 V54 M795.5 50 V54 M782 52 H795 M797 55.5 H801 M797 65.5 H801 M799 56 V65" stroke="#000"/>
<path d="M812.5 50 V66.5 H829 M813 55 Q822 55 823 65" fill="none" stroke="#000"/><path d="M821 63 L823 66 L825 63" fill="none" stroke="#000"/>
<path d="M839.5 57 A10 10 0 0 1 859 57 L849 66 Z" fill="none" stroke="#000" stroke-width="1.1"/><path d="M845 62 Q849 59 853 62" fill="none" stroke="#000"/>
<path d="M19.2 86.2 l4.6 4.6 M23.8 86.2 l-4.6 4.6" stroke="#f00" stroke-width="1"/>
<path d="M43 82.5 L56 95.5" stroke="#000" stroke-width="1.1"/>
<path d="M70 91 Q79 76 88 91" fill="none" stroke="#000"/><path d="M76.5 91.5 H82.5 M79.5 88.5 V94.5" stroke="#000" stroke-width="1.1"/><path d="M68.5 89.5 l3.0 3.0 M71.5 89.5 l-3.0 3.0" stroke="#f00" stroke-width="1"/><path d="M77.5 80.5 l3.0 3.0 M80.5 80.5 l-3.0 3.0" stroke="#f00" stroke-width="1"/><path d="M86.5 89.5 l3.0 3.0 M89.5 89.5 l-3.0 3.0" stroke="#f00" stroke-width="1"/>
<path d="M101 94 Q103 86 106 89 Q109 93 113 83" fill="none" stroke="#000" stroke-width="1.1"/>
<path d="M130 82.5 H139 L145 89 L133.5 95.5 L134 88" fill="none" stroke="#000" stroke-width="1.1"/>
<circle cx="165.5" cy="89" r="7.5" fill="none" stroke="#000" stroke-width="1.1"/><path d="M164.2 87.7 l2.6 2.6 M166.8 87.7 l-2.6 2.6" stroke="#f00" stroke-width="1"/>
<ellipse cx="195" cy="89" rx="9.5" ry="4" fill="none" stroke="#000" stroke-width="1.1"/>
<rect x="215.5" y="83.5" width="17.5" height="11" fill="none" stroke="#000" stroke-width="1.1"/><path d="M214.3 82.3 l2.4 2.4 M216.7 82.3 l-2.4 2.4" stroke="#f00" stroke-width="1"/><path d="M231.8 93.3 l2.4 2.4 M234.2 93.3 l-2.4 2.4" stroke="#f00" stroke-width="1"/>
<path d="M252.5 80 L254.8 86.5 H261.5 L256 90.5 L258.3 97.5 L252.5 93 L246.7 97.5 L249 90.5 L243.5 86.5 H250.2 Z" fill="none" stroke="#000" stroke-width="1.1"/>
<path d="M279 80.5 H285 L290.5 86 V92 L285 97.5 H279 L273.5 92 V86 Z" fill="none" stroke="#000" stroke-width="1.1"/>
<path d="M409 83.5 H424" stroke="#0000cc" stroke-width="1.2"/><path d="M414 82 L418 90 M420 82 L416 90" stroke="#000"/><circle cx="414" cy="93" r="2" fill="none" stroke="#00008a" stroke-width="1.2"/><circle cx="419" cy="93" r="2" fill="none" stroke="#00008a" stroke-width="1.2"/>
<path d="M444 80 L456 91" stroke="#000"/><path d="M438 96 L448 86" stroke="#000"/><path d="M441 93 L448 86" stroke="#f00"/><path d="M448 86 L444 86.5 L447.5 90 Z" fill="#f00"/>
<path d="M467.5 98 V81.5 H484" fill="none" stroke="#000" stroke-width="1.3"/><path d="M468 92 Q470 84 478 82" fill="none" stroke="#f00"/>
<path d="M496.5 98 V81.5 H513" fill="none" stroke="#000" stroke-width="1.3"/><path d="M497 92 L507 82" stroke="#f00"/>
<path d="M525.5 96 V82.5 H537 M534 95.5 H540.5 V84" fill="none" stroke="#a0a0a0" stroke-width="1.1"/><rect x="537.5" y="80.5" width="4" height="4" fill="none" stroke="#a0a0a0"/>
<path d="M552.5 98 V88 L560 80.5 H572" fill="none" stroke="#0000ff" stroke-width="1.3"/><path d="M559.5 98 V94 L567 86.5 H572" fill="none" stroke="#000" stroke-width="1.3"/><path d="M556 88 L560 92 M561 83 L565 87" stroke="#f00"/>
<ellipse cx="591" cy="88.5" rx="10.5" ry="3.5" fill="none" stroke="#a0a0a0" stroke-width="1.1"/><ellipse cx="591" cy="88.5" rx="7" ry="1.5" fill="none" stroke="#a0a0a0" stroke-width=".8"/>
<rect x="610.5" y="79.5" width="20" height="19" fill="none" stroke="#a0a0a0" stroke-width="1.1"/><rect x="613.5" y="82.5" width="14" height="13" fill="none" stroke="#a0a0a0"/><rect x="616.5" y="85.5" width="8" height="7" fill="none" stroke="#a0a0a0"/><rect x="619" y="88" width="3" height="2" fill="none" stroke="#a0a0a0" stroke-width=".7"/>
<path d="M639.5 79.5 h6 v5 h-6 z M642.5 82.5 h6 v5 h-6 z" fill="none" stroke="#a0a0a0"/><path d="M649 82 Q654 82 654 86 M652 84 L654 87 L656 84" fill="none" stroke="#a0a0a0"/><path d="M650.5 90.5 h5 v3 h3 v5 h-6 v-3 h-2 z" fill="none" stroke="#a0a0a0"/>
<path d="M668.5 79.5 h6 v5 h-6 z M671.5 82.5 h6 v5 h-6 z" fill="none" stroke="#a0a0a0"/><path d="M678 82 Q683 82 683 86 M681 84 L683 87 L685 84" fill="none" stroke="#a0a0a0"/><path d="M679.5 90.5 h6 v4 h-3 v3 h-3 z" fill="none" stroke="#a0a0a0"/>
<path d="M697.5 79.5 h6 v5 h-6 z M700.5 82.5 h6 v5 h-6 z" fill="none" stroke="#a0a0a0"/><path d="M707 82 Q712 82 712 86 M710 84 L712 87 L714 84" fill="none" stroke="#a0a0a0"/><rect x="710.5" y="93.5" width="3" height="3" fill="none" stroke="#a0a0a0"/>
<rect x="735.5" y="79.5" width="9" height="8" fill="none" stroke="#a0a0a0"/><rect x="745.5" y="90.5" width="9" height="8" fill="none" stroke="#a0a0a0"/><path d="M746 83 L752 88 M749 88 H752 V85" fill="none" stroke="#a0a0a0"/>
<rect x="763.5" y="83.5" width="6" height="14" fill="none" stroke="#a0a0a0"/><rect x="776.5" y="83.5" width="6" height="14" fill="none" stroke="#a0a0a0"/><path d="M773 81 V99 M767 79.5 H782 M779 77.5 L782 79.5 L779 81.5" fill="none" stroke="#a0a0a0"/>
<path d="M802.5 83.5 L810.5 91 L802.5 98.5 L794.5 91 Z" fill="none" stroke="#a0a0a0"/><rect x="797.5" y="86" width="10" height="10" fill="none" stroke="#a0a0a0"/><path d="M796 79.5 H811 M808 77.5 L811 79.5 L808 81.5" fill="none" stroke="#a0a0a0"/>
<path d="M822.5 97.5 L826 85.5 H842 L838.5 97.5 Z" fill="none" stroke="#a0a0a0"/><path d="M826 79.5 H840 M837 77.5 L840 79.5 L837 81.5" fill="none" stroke="#a0a0a0"/>
<rect x="852.5" y="84.5" width="17" height="13" fill="none" stroke="#a0a0a0"/><path d="M852.5 89.5 H869 M854 79.5 H869 M866 77.5 L869 79.5 L866 81.5" fill="none" stroke="#a0a0a0"/>
<rect x="884.5" y="80.5" width="3" height="3" fill="none" stroke="#a0a0a0" stroke-width=".9"/><rect x="888.8" y="80.5" width="3" height="3" fill="none" stroke="#a0a0a0" stroke-width=".9"/><rect x="893.1" y="80.5" width="3" height="3" fill="none" stroke="#a0a0a0" stroke-width=".9"/><rect x="897.4" y="80.5" width="3" height="3" fill="none" stroke="#a0a0a0" stroke-width=".9"/><rect x="884.5" y="85.5" width="3" height="3" fill="none" stroke="#a0a0a0" stroke-width=".9"/><rect x="888.8" y="85.5" width="3" height="3" fill="none" stroke="#a0a0a0" stroke-width=".9"/><rect x="893.1" y="85.5" width="3" height="3" fill="none" stroke="#a0a0a0" stroke-width=".9"/><rect x="897.4" y="85.5" width="3" height="3" fill="none" stroke="#a0a0a0" stroke-width=".9"/><rect x="884.5" y="90.5" width="3" height="3" fill="none" stroke="#a0a0a0" stroke-width=".9"/><rect x="888.8" y="90.5" width="3" height="3" fill="none" stroke="#a0a0a0" stroke-width=".9"/><rect x="893.1" y="90.5" width="3" height="3" fill="none" stroke="#a0a0a0" stroke-width=".9"/><rect x="897.4" y="90.5" width="3" height="3" fill="none" stroke="#a0a0a0" stroke-width=".9"/><path d="M880.5 82 V97 M885 98.5 H896 M893 96.5 L896 98.5 L893 100.5 M878.5 84 L880.5 81 L882.5 84" fill="none" stroke="#a0a0a0"/>
<path d="M909 92 Q919 78 929 92" fill="none" stroke="#a0a0a0"/><rect x="908.5" y="83.5" width="3" height="3" fill="none" stroke="#a0a0a0"/><rect x="917.5" y="79.5" width="3" height="3" fill="none" stroke="#a0a0a0"/><rect x="926.5" y="83.5" width="3" height="3" fill="none" stroke="#a0a0a0"/>
<path d="M938.5 81 V92 M943 82 V90 M948 82 V90 M953 82 V89 M939 96 Q952 95 958 82" fill="none" stroke="#a0a0a0"/><path d="M941 89 L943 92 L945 89 M946 89 L948 92 L950 89" fill="none" stroke="#a0a0a0"/>
<path d="M969 96 Q977 93 976 88 Q976 83 984 81" fill="none" stroke="#a0a0a0"/><rect x="967.5" y="95.5" width="3" height="3" fill="none" stroke="#a0a0a0"/><rect x="974.5" y="86.5" width="3" height="3" fill="none" stroke="#a0a0a0"/><rect x="982.5" y="79.5" width="3" height="3" fill="none" stroke="#a0a0a0"/>
<rect x="996.5" y="80.5" width="17" height="15" fill="none" stroke="#a0a0a0"/><path d="M999 88 H1011 M1005 82 V94 M1001 86 L999 88 L1001 90 M1009 86 L1011 88 L1009 90 M1003 84 L1005 82 L1007 84 M1003 92 L1005 94 L1007 92" fill="none" stroke="#a0a0a0"/>
<path d="M1024.5 83 V93 M1044.5 83 V93 M1029 80.5 H1040 M1029 97.5 H1040 M1027 88 H1042 M1034.5 78 V99" fill="none" stroke="#a0a0a0"/><rect x="1030.5" y="84.5" width="8" height="7" fill="none" stroke="#a0a0a0"/>
<rect x="1053.5" y="78.5" width="21" height="21" fill="none" stroke="#a0a0a0" stroke-width="1.2"/><rect x="1056.5" y="81.5" width="7" height="7" fill="none" stroke="#a0a0a0"/><rect x="1060.5" y="85.5" width="7" height="7" fill="none" stroke="#a0a0a0"/><rect x="1064.5" y="89.5" width="7" height="7" fill="none" stroke="#a0a0a0"/>
<rect x="1085.5" y="80.5" width="7" height="7" fill="none" stroke="#a0a0a0"/><rect x="1089.5" y="84.5" width="7" height="7" fill="none" stroke="#a0a0a0"/><rect x="1093.5" y="88.5" width="7" height="7" fill="none" stroke="#a0a0a0"/>
<path d="M1113 79 H1131 V90 H1129 A9 9 0 0 1 1113 90 Z" fill="#a0a0a0"/><path d="M1115 90 A7 7 0 0 1 1129 90 Z" fill="#f0f0f0"/>
<path d="M1142 79 H1160 V90 H1158 A8 9 0 0 1 1144 90 H1142 Z" fill="#a0a0a0"/>
<rect x="395" y="75" width="5" height="29" fill="#fff"/><rect x="683" y="44" width="5" height="28" fill="#fff"/><rect x="723" y="75" width="4" height="29" fill="#fff"/>
</svg>
<svg class="a" style="left:0;top:0" width="1360" height="728" viewBox="0 0 1360 728">
<path d="M1 11 L6 9 L15 13 L15 18 L7 19 L1 14 Z" fill="#505050"/><path d="M1 11 L6 9 L15 13 L8 15 Z" fill="#909090"/><rect x="8" y="3" width="4" height="2" fill="#303030"/><rect x="9" y="5" width="2" height="6" fill="#e0a020"/><ellipse cx="10" cy="13" rx="1.5" ry="2" fill="#e0a0f0"/>
<rect x="1.5" y="114.5" width="28" height="27" rx="3" fill="#dedede" stroke="#7a7a7a"/>
<rect x="7.5" y="122.5" width="16" height="13" fill="none" stroke="#0000e0" stroke-width="1.5"/>
<rect x="6.0" y="121.0" width="3" height="3" fill="#fff" stroke="#0000e0" stroke-width="1.2"/>
<rect x="22.0" y="121.0" width="3" height="3" fill="#fff" stroke="#0000e0" stroke-width="1.2"/>
<rect x="6.0" y="134.0" width="3" height="3" fill="#fff" stroke="#0000e0" stroke-width="1.2"/>
<rect x="22.0" y="134.0" width="3" height="3" fill="#fff" stroke="#0000e0" stroke-width="1.2"/>
<rect x="14.0" y="121.0" width="3" height="3" fill="#fff" stroke="#f00" stroke-width="1.2"/>
<rect x="14.0" y="134.0" width="3" height="3" fill="#fff" stroke="#f00" stroke-width="1.2"/>
<rect x="6.0" y="127.5" width="3" height="3" fill="#fff" stroke="#f00" stroke-width="1.2"/>
<rect x="22.0" y="127.5" width="3" height="3" fill="#fff" stroke="#f00" stroke-width="1.2"/>
<rect x="14" y="127.5" width="3" height="3" fill="none" stroke="#0c0" stroke-width="1"/>
<path d="M5 167 L12 153 M12 153 L25 146 M12 153 L19 166 M12 153 L25 161" stroke="#0000ff" stroke-width="1.3"/><rect x="9" y="150" width="6" height="6" fill="#fff" stroke="#f00" stroke-width="1.6"/><path d="M18 160 L26 163 L21 166Z" fill="#0000ff"/>
<text x="4" y="193" font-family="Liberation Serif" font-weight="bold" font-size="13" fill="#006000">abc</text><rect x="4.5" y="194.5" width="21" height="3" rx="1.5" fill="#0000c0"/><rect x="23" y="195" width="3" height="2" fill="#ff0"/>
<path d="M11 208.5 H19 L25 214.5 V222.5 L19 228.5 H11 L5 222.5 V214.5 Z" fill="#fff" stroke="#f00" stroke-width="1.7"/><rect x="10.5" y="213.5" width="9" height="9" fill="none" stroke="#0000c0" stroke-width="1.6"/>
<path d="M3 237 L10 246 L3 253 Z" fill="#00e0f0"/><path d="M3 237 L3 259 L10 253 Z" fill="#00e8ff"/><path d="M5 247 L14 238 L24 248 L22 257 L14 258 Z" fill="#fff" stroke="#000060" stroke-width="1.4"/><path d="M5 247 L14 238 L15 252 Z" fill="#ffff00"/>
<path d="M3 275 L14 275 L22 285 L11 285 Z" fill="#e8b000" stroke="#900000" stroke-width="1"/><path d="M11 281 L22 270 L25 272 L15 284 Z" fill="#a0b8ff" stroke="#203080" stroke-width="1"/>
<ellipse cx="15" cy="303" rx="4" ry="2" fill="#ff0" stroke="#000" stroke-width=".7"/><path d="M11 303 V308 L7 313 L15 316 L23 313 L19 308 V303" fill="#00e000" stroke="#004000" stroke-width=".7"/>
<rect x="12.5" y="328.5" width="6" height="20" fill="#fff" stroke="#000"/><path d="M13 333 L18 330 M13 337 L18 334 M13 341 L18 338 M13 345 L18 342" stroke="#000"/><text x="4" y="343" font-size="7" font-weight="bold" fill="#f00">N</text><text x="20" y="343" font-size="7" font-weight="bold" fill="#f00">C</text>
<rect x="6.5" y="368.5" width="7" height="7" fill="#fff" stroke="#000"/><circle cx="15.0" cy="377.0" r="4.5" fill="#00ffff" stroke="#000080" stroke-width="1.5"/><path d="M18.1 380.1 L22.2 384.2" stroke="#ff00ff" stroke-width="2.2"/>
<circle cx="13.0" cy="403.0" r="4.5" fill="#00ffff" stroke="#000080" stroke-width="1.5"/><path d="M16.1 406.1 L20.2 410.2" stroke="#ff00ff" stroke-width="2.2"/><path d="M17 398 H22" stroke="#000080" stroke-width="1.2"/>
<circle cx="13.0" cy="431.0" r="4.5" fill="#00ffff" stroke="#000080" stroke-width="1.5"/><path d="M16.1 434.1 L20.2 438.2" stroke="#ff00ff" stroke-width="2.2"/><path d="M17 426 H23 M20 423 V429" stroke="#000080" stroke-width="1.2"/>
<path d="M8 454 H16 L9 462 H17 M12 459 H20 L13 467 H21 M8 466 L10 463" fill="none" stroke="#a0a0a0" stroke-width="1.3"/>
<ellipse cx="14" cy="489" rx="8" ry="5" fill="#00008a"/><circle cx="14" cy="489" r="3" fill="#00e0ff"/><path d="M7 484 L8 481 M10 483 L11 480 M14 483 V480 M18 483 L17 480 M21 484 L20 481" stroke="#000080"/><path d="M7 493 Q14 498 21 493" fill="none" stroke="#707070" stroke-width="1.5"/>
<circle cx="14.5" cy="513.5" r="5" fill="#e0ffff" stroke="#000080" stroke-width="1.3"/><path d="M14.5 511 V516" stroke="#000080"/><path d="M18 517 L22 522" stroke="#ff00ff" stroke-width="2"/><rect x="7" y="518" width="4" height="4" fill="#ff00ff"/>
<path d="M14 542 V558 M6 550 H22 M11 545 L14 542 L17 545 M11 555 L14 558 L17 555 M9 547 L6 550 L9 553 M19 547 L22 550 L19 553" fill="none" stroke="#000" stroke-width="1.4"/>
<circle cx="13" cy="577" r="5.5" fill="#fff" stroke="#000" stroke-width="1.3"/><path d="M13 574 V580 M11.5 575.5 L13 574 L14.5 575.5 M11.5 578.5 L13 580 L14.5 578.5" stroke="#000" fill="none"/><path d="M17 581 L21 585" stroke="#008080" stroke-width="2.2"/>
<path d="M8 604 A6 6 0 0 1 19 601 M20 608 A6 6 0 0 1 9 611" fill="none" stroke="#000" stroke-width="1.4"/><path d="M17 598 L20 602 L15 603 Z M11 614 L8 610 L13 609 Z" fill="#000"/>
<circle cx="46" cy="125" r="5.5" fill="#006000" stroke="#333" stroke-width="1.2"/><rect x="43.5" y="130.5" width="5" height="4" fill="#fff" stroke="#333"/>
<circle cx="46" cy="153" r="5.5" fill="#ffff00" stroke="#333" stroke-width="1.2"/><rect x="43.5" y="158.5" width="5" height="4" fill="#fff" stroke="#333"/>
<path d="M41 179 L41 189 L44 186 L47 190 L48 188 L46 185 L49 184 Z" fill="#a0a0a0"/><circle cx="50" cy="180" r="4" fill="none" stroke="#a0a0a0" stroke-width="1.3"/><rect x="48" y="184" width="4" height="4" fill="none" stroke="#a0a0a0"/>
<circle cx="43" cy="207" r="3.3" fill="#909090" stroke="#000" stroke-width=".6"/><circle cx="50" cy="216" r="3.3" fill="#ffff00" stroke="#000" stroke-width=".6"/><path d="M50 203 V209 M48 207 L50 210 L52 207 M43 211 V217 M41 213 L43 210 L45 213" stroke="#000" stroke-width="1.4" fill="none"/>
<path d="M52 234 L46 234 L46 231 L40 238 L46 244 L46 241 L52 241 Z" fill="#a0a0a0"/>
<path d="M41 263 L47 263 L47 260 L53 267 L47 273 L47 270 L41 270 Z" fill="#a0a0a0"/>
<path d="M40.5 296 L45 292 V306 L40.5 310 Z M44 296 L48.5 292 V306 L44 310 Z M47.5 296 L52 292 V306 L47.5 310 Z" fill="#fff" stroke="#000090" stroke-width="1.1"/>
<path d="M38 323 H55 M38 327 H44 M47 327 H49 M52 327 H55 M38 331 H40 M43 331 H45 M48 331 H50 M53 331 H55 M38 335 H55" stroke="#400040" stroke-width="1.6"/><path d="M38 327 H55 M38 335 H55" stroke="#a000a0" stroke-width=".6"/>
<path d="M39 352 H54 L49 358 V364 H44 V358 Z" fill="none" stroke="#a0a0a0" stroke-width="1.2"/><path d="M42 349 V351 M46.5 349 V351 M51 349 V351" stroke="#a0a0a0"/></svg>
<svg class="a" style="left:0;top:0" width="1360" height="728" viewBox="0 0 1360 728">
<path d="M16 697 L26 686" stroke="#000" stroke-width="1.1"/><circle cx="16.0" cy="697.0" r="1.8" fill="#00ffff" stroke="#a00000" stroke-width="1"/><circle cx="26.0" cy="686.0" r="1.8" fill="#00ffff" stroke="#a00000" stroke-width="1"/>
<path d="M42 685 Q52 685 53 696 M43 697 L49 691 M56 682 L50 688" fill="none" stroke="#000" stroke-width="1.1"/><path d="M48 688 L45 692 L51 692 Z" fill="#00f"/><path d="M59 681 L56 685" stroke="#00f" stroke-width="1.5"/><path d="M50 687 L54 687 L54 683 Z" fill="#00f"/><path d="M47 691 L46 688 M47 691 L50 691" stroke="#00f" stroke-width="1.3"/><circle cx="52.0" cy="688.0" r="1.5" fill="#00ffff" stroke="#a00000" stroke-width="1"/>
<path d="M72 685 Q80 685 82 689 L85 697" fill="none" stroke="#000" stroke-width="1.1"/><circle cx="82.0" cy="688.0" r="1.8" fill="#ffff00" stroke="#a00000" stroke-width="1"/>
<path d="M102 686 L114 697 M114 684 L102 697" stroke="#000" stroke-width="1.1"/><circle cx="108.5" cy="691.0" r="1.8" fill="#00ffff" stroke="#a00000" stroke-width="1"/>
<path d="M132 684.5 H136 Q144 685 145 697" fill="none" stroke="#000" stroke-width="1.1"/><path d="M133 688 V696 M134 696 H144" stroke="#888" stroke-dasharray="1 1"/><circle cx="133.0" cy="696.0" r="1.8" fill="#00ffff" stroke="#a00000" stroke-width="1"/>
<path d="M166 684 L172 690 L166 697 L160 690 Z" fill="none" stroke="#000" stroke-width="1.1"/><circle cx="166.0" cy="684.0" r="1.5" fill="#ffff00" stroke="#a00000" stroke-width="1"/><circle cx="172.0" cy="690.0" r="1.5" fill="#ffff00" stroke="#a00000" stroke-width="1"/><circle cx="166.0" cy="697.0" r="1.5" fill="#ffff00" stroke="#a00000" stroke-width="1"/><circle cx="160.0" cy="690.0" r="1.5" fill="#ffff00" stroke="#a00000" stroke-width="1"/>
<path d="M193 682 V695 M186 695.5 H204 M197 688 H200 V694" fill="none" stroke="#000" stroke-width="1.1"/><path d="M197 688 H200 V694" stroke="#aaa" stroke-width=".8" stroke-dasharray="1 1" fill="none"/><circle cx="193.0" cy="695.0" r="1.8" fill="#00ffff" stroke="#a00000" stroke-width="1"/>
<path d="M214 690 Q220 686 226 688 Q231 693 226 700 M217 682 L233 697" fill="none" stroke="#000" stroke-width="1.1"/><circle cx="224.0" cy="689.0" r="1.8" fill="#ff00ff" stroke="#a00000" stroke-width="1"/>
<rect x="245.5" y="678.5" width="28" height="25" rx="3" fill="#dcdcdc" stroke="#707070"/><rect x="274.5" y="678.5" width="28" height="25" rx="3" fill="#dcdcdc" stroke="#707070"/>
<circle cx="259" cy="691" r="3.8" fill="#000080"/><circle cx="259" cy="691" r="2" fill="#00ffff"/><path d="M255 691 H263 M259 687 V695" stroke="#fff" stroke-width=".8"/>
<path d="M288 683 V691 L283 696 M288 691 L294 696" fill="none" stroke="#000"/><text x="290" y="687" font-size="5" font-weight="bold">z</text><text x="279" y="698" font-size="5">y</text><text x="293" y="698" font-size="5">x</text><circle cx="288.0" cy="691.0" r="1.6" fill="#ffff00" stroke="#a00000" stroke-width="1"/>
<path d="M312.0 691.0 l10 -9 l10 9 l-10 9 z M317.0 686.5 l10 9 M317.0 695.5 l10 -9" fill="none" stroke="#000"/><circle cx="318.0" cy="687.0" r="1.8" fill="#ff00ff" stroke="#a00000" stroke-width="1"/>
<path d="M341.0 691.0 l10 -9 l10 9 l-10 9 z M346.0 686.5 l10 9 M346.0 695.5 l10 -9" fill="none" stroke="#000"/><circle cx="357.0" cy="687.0" r="1.8" fill="#ff00ff" stroke="#a00000" stroke-width="1"/>
<path d="M370.0 691.0 l10 -9 l10 9 l-10 9 z M375.0 686.5 l10 9 M375.0 695.5 l10 -9" fill="none" stroke="#000"/><circle cx="380.0" cy="691.0" r="1.8" fill="#ff00ff" stroke="#a00000" stroke-width="1"/>
<path d="M412 683 V693 H422 M407 695 H423 M407 697.5 H422 M410 699.5 H420" fill="none" stroke="#000"/><circle cx="422.0" cy="692.0" r="1.5" fill="#ffa000" stroke="#a00000" stroke-width="1"/>
<path d="M441 683 V693 H451 M436 695 H452 M436 697.5 H451 M439 699.5 H449 M452 684 L447 689" fill="none" stroke="#000"/><path d="M449 684 H452 V687" stroke="#00f" fill="none"/><circle cx="446.0" cy="691.0" r="1.6" fill="#ff00ff" stroke="#a00000" stroke-width="1"/>
<path d="M472 684 L472 696 L475 693 L478 699 L480 698 L477 692 L481 692 Z" fill="#000"/><path d="M478 682 L488 691 M488 682 L478 691" stroke="#000" stroke-width=".8"/><circle cx="483.0" cy="686.5" r="1.6" fill="#ffff00" stroke="#a00000" stroke-width="1"/>
<path d="M501 684 L501 696 L504 693 L507 699 L509 698 L506 692 L510 692 Z" fill="#000"/><path d="M507 683 L514 690 M514 683 L507 690" stroke="#f00" stroke-width="2"/>
<path d="M534 694 L541 688 L552 691 L545 697 Z" fill="none" stroke="#000"/><path d="M543 684 V691 M548 682 V688 M546 686 L548 689 L550 686" fill="none" stroke="#000" stroke-width="1.1"/><path d="M548 682 V688 M546 686 L548 689 L550 686" fill="none" stroke="#00f" stroke-width="1.1"/><circle cx="544.0" cy="693.0" r="1.6" fill="#ff00ff" stroke="#a00000" stroke-width="1"/><rect x="541.5" y="682.5" width="3" height="3" fill="#fff" stroke="#a00000"/>
<path d="M565 696 L582 682 M566 685 L569 688 L566 689" fill="none" stroke="#000"/><path d="M566 685 L569 688 M566 688 H569 V685" fill="none" stroke="#00f" stroke-width="1.2"/><circle cx="567.0" cy="696.0" r="1.6" fill="#ff00ff" stroke="#a00000" stroke-width="1"/><circle cx="575.0" cy="688.0" r="1.4" fill="#fff" stroke="#a00000" stroke-width="1"/>
<rect x="600.5" y="684.5" width="10" height="14" fill="#fff" stroke="#888"/><path d="M602 688 H609 M602 690.5 H609 M602 693 H609 M602 695.5 H609 M592 683 L602 692 M602 683 L592 692" stroke="#000" stroke-width=".9"/><circle cx="597.0" cy="688.0" r="1.5" fill="#ffff00" stroke="#a00000" stroke-width="1"/>
<path d="M624 684 L636 698 M636 684 L624 698" stroke="#e00000" stroke-width="3"/>
<rect x="1268" y="647" width="32" height="50" rx="7" fill="#ea1c24"/>
<path d="M1297 664 A10.5 16 0 1 0 1297 681" fill="none" stroke="#fff" stroke-width="8"/>
<path d="M1282 652 V658 M1282 686 V692" stroke="#ea1c24" stroke-width="1.5"/>
<path d="M1305 696 V657 M1305 657 L1322 696 M1322 696 V657" fill="none" stroke="#1f3f8a" stroke-width="5"/>
<path d="M1307 660 L1321 693" stroke="#fff" stroke-width="1"/>
<path d="M1350 666 A11 17 0 1 0 1350 684" fill="none" stroke="#f7941d" stroke-width="7"/>
<path d="M1340 653 V659" stroke="#f0f0f0" stroke-width="1.5"/>
<path d="M1309 651 l2 4.5 5 .4 -3.8 3.2 1.2 4.9 -4.4 -2.7 -4.4 2.7 1.2 -4.9 -3.8 -3.2 5 -.4 z" fill="#a3784a"/>
<path d="M1311 652 Q1314 638 1321 630" fill="none" stroke="#e82020" stroke-width="3.2" stroke-linecap="round"/><path d="M1314 654 Q1320 641 1330 632" fill="none" stroke="#1f3f8a" stroke-width="3.2" stroke-linecap="round"/><path d="M1317 656 Q1323 648 1329 642" fill="none" stroke="#f7941d" stroke-width="3" stroke-linecap="round"/>
<rect x="1267" y="701" width="85" height="14" rx="7" fill="#1f3f8a"/><text x="1309.5" y="712" text-anchor="middle" font-family="Liberation Serif" font-weight="bold" font-size="12" fill="#fff" textLength="78" lengthAdjust="spacingAndGlyphs">Khomaucnc.vn</text><path d="M1274 719 H1346" stroke="#a3784a" stroke-width="1"/></svg>
</body></html>
